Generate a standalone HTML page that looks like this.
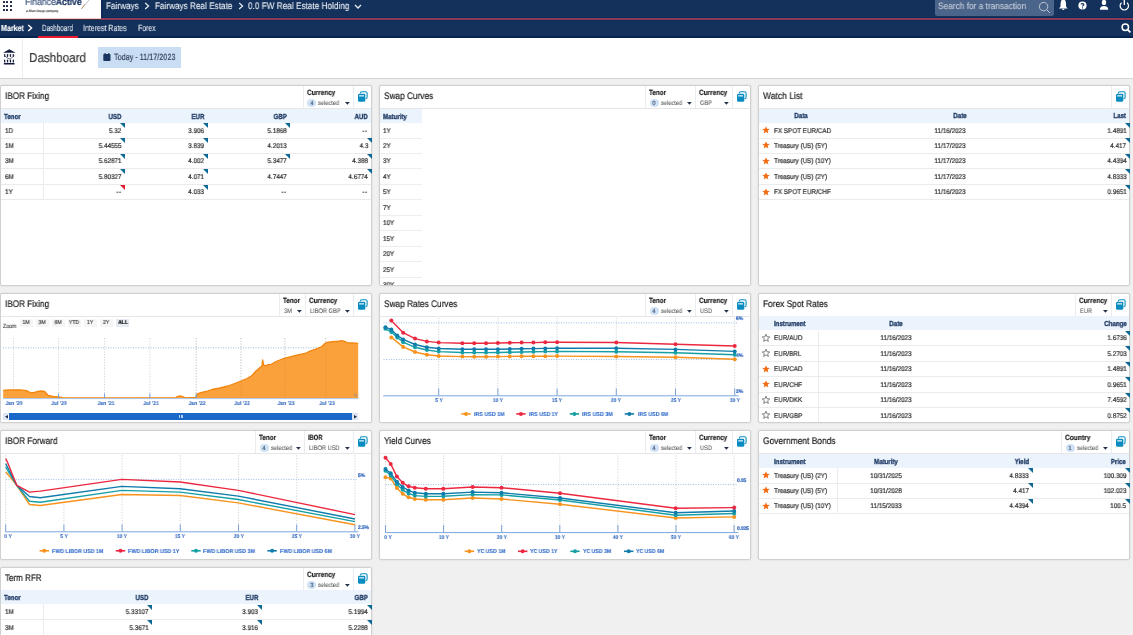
<!DOCTYPE html><html><head><meta charset="utf-8"><title>Dashboard</title><style>*{margin:0;padding:0}
html,body{width:1133px;height:635px;overflow:hidden;background:#f0f0f0}
body{position:relative;font-family:"Liberation Sans",sans-serif}
.r{position:absolute}
.t{position:absolute;white-space:nowrap;line-height:1;-webkit-text-stroke:0.2px currentColor;will-change:transform;text-rendering:geometricPrecision}
.ns{-webkit-text-stroke:0.12px currentColor}
svg.r{overflow:visible}</style></head><body><div style="position:absolute;left:0;top:0;width:1133px;height:635px;overflow:hidden">
<div class="r" style="left:0px;top:0px;width:1133px;height:38px;background:#13315a;"></div>
<div class="r" style="left:0px;top:0px;width:101px;height:19px;background:#fff;"></div>
<div class="r" style="left:0px;top:18px;width:101px;height:1px;background:#ffc8c8;"></div>
<div class="r" style="left:0px;top:19px;width:101px;height:1px;background:#3a3040;"></div>
<div class="r" style="left:101px;top:17px;width:1032px;height:1px;background:#0b2c5a;"></div>
<div class="r" style="left:101px;top:18px;width:1032px;height:2px;background:#8f3a57;"></div>
<div class="r" style="left:101px;top:20px;width:1032px;height:1px;background:#0b2c5a;"></div>
<div class="r" style="left:0px;top:36px;width:1133px;height:2px;background:#04234f;"></div>
<div class="r" style="left:101px;top:0px;width:2px;height:18px;background:#0c2b55;"></div>
<div class="r" style="left:2.7px;top:0.9px;width:2.2px;height:2.2px;background:#0a1430;border-radius:0.4px;"></div>
<div class="r" style="left:6.3px;top:0.9px;width:2.2px;height:2.2px;background:#0a1430;border-radius:0.4px;"></div>
<div class="r" style="left:10.0px;top:0.9px;width:2.2px;height:2.2px;background:#0a1430;border-radius:0.4px;"></div>
<div class="r" style="left:2.7px;top:4.9px;width:2.2px;height:2.2px;background:#0a1430;border-radius:0.4px;"></div>
<div class="r" style="left:6.3px;top:4.9px;width:2.2px;height:2.2px;background:#0a1430;border-radius:0.4px;"></div>
<div class="r" style="left:10.0px;top:4.9px;width:2.2px;height:2.2px;background:#0a1430;border-radius:0.4px;"></div>
<div class="r" style="left:2.7px;top:8.8px;width:2.2px;height:2.2px;background:#0a1430;border-radius:0.4px;"></div>
<div class="r" style="left:6.3px;top:8.8px;width:2.2px;height:2.2px;background:#0a1430;border-radius:0.4px;"></div>
<div class="r" style="left:10.0px;top:8.8px;width:2.2px;height:2.2px;background:#0a1430;border-radius:0.4px;"></div>
<div class="t" style="left:25px;top:-2.5px;font-size:9.6px;transform:scaleX(0.93);transform-origin:left;letter-spacing:-0.15px"><span style="color:#4b6088">Finance</span><span style="font-weight:bold;color:#16305e">Active</span></div>
<svg class="r" style="left:80px;top:0px;width:12px;height:10px" viewBox="0 0 12 10"><line x1="10" y1="-1" x2="1.5" y2="8.7" stroke="#9aa0aa" stroke-width="0.7"/><line x1="5" y1="4.4" x2="1.5" y2="8.7" stroke="#c8834a" stroke-width="0.8"/></svg>
<div class="t" style="left:25.60px;top:10.08px;font-size:3.20px;color:#666;transform:scaleX(0.977);transform-origin:left;">a Allan Group company</div>
<div class="t ns" style="left:106.00px;top:1.94px;font-size:9.60px;color:#e9edf3;transform:scaleX(0.854);transform-origin:left;">Fairways</div>
<svg class="r" style="left:143.5px;top:2px;width:6px;height:8px" viewBox="0 0 6 8"><polyline points="1.2,1 4.6,4 1.2,7" fill="none" stroke="#e9edf3" stroke-width="1.2"/></svg>
<div class="t ns" style="left:154.80px;top:1.94px;font-size:9.60px;color:#e9edf3;transform:scaleX(0.853);transform-origin:left;">Fairways Real Estate</div>
<svg class="r" style="left:237.5px;top:2px;width:6px;height:8px" viewBox="0 0 6 8"><polyline points="1.2,1 4.6,4 1.2,7" fill="none" stroke="#e9edf3" stroke-width="1.2"/></svg>
<div class="t ns" style="left:248.00px;top:1.94px;font-size:9.60px;color:#e9edf3;transform:scaleX(0.857);transform-origin:left;">0.0 FW Real Estate Holding</div>
<svg class="r" style="left:354px;top:3.5px;width:8px;height:6px" viewBox="0 0 8 6"><polyline points="1,1 4,4 7,1" fill="none" stroke="#e9edf3" stroke-width="1.3"/></svg>
<div class="r" style="left:935px;top:0px;width:118.5px;height:16px;background:#4b6489;border-radius:0 0 2.5px 2.5px;"></div>
<div class="t ns" style="left:937.90px;top:2.38px;font-size:9.20px;color:#c6cfdc;transform:scaleX(0.904);transform-origin:left;">Search for a transaction</div>
<svg class="r" style="left:1038px;top:1px;width:13px;height:13px" viewBox="0 0 13 13"><circle cx="5.6" cy="5.6" r="4.2" fill="none" stroke="#c6cfdc" stroke-width="0.9"/><line x1="8.6" y1="8.6" x2="11.8" y2="11.8" stroke="#c6cfdc" stroke-width="1"/></svg>
<svg class="r" style="left:1058px;top:0px;width:11px;height:11px" viewBox="0 0 11 11"><path d="M5.3 -0.5 C3 -0.5 2.6 2 2.6 4 L2.5 6.3 C2.3 7.3 1.5 7.9 0.9 8.5 L9.7 8.5 C9.1 7.9 8.3 7.3 8.1 6.3 L8 4 C8 2 7.6 -0.5 5.3 -0.5Z" fill="#fff"/><path d="M4.1 8.8 A1.2 1.2 0 0 0 6.5 8.8Z" fill="#fff"/></svg>
<svg class="r" style="left:1078px;top:1px;width:9px;height:9px" viewBox="0 0 9 9"><circle cx="4.5" cy="4.5" r="4.1" fill="#fff"/><path d="M3.1 3.5 C3.1 2.3 5.9 2.3 5.9 3.6 C5.9 4.5 4.5 4.5 4.5 5.5" fill="none" stroke="#13315a" stroke-width="1.1"/><circle cx="4.5" cy="6.9" r="0.65" fill="#13315a"/></svg>
<svg class="r" style="left:1099px;top:0px;width:11px;height:11px" viewBox="0 0 11 11"><ellipse cx="5" cy="2.4" rx="2.2" ry="2.7" fill="#fff"/><path d="M0.9 9.7 C0.9 7 2.8 6 5 6 C7.2 6 9.3 7 9.3 9.7Z" fill="#fff"/></svg>
<svg class="r" style="left:1118px;top:0px;width:12px;height:12px" viewBox="0 0 12 12"><path d="M3.6 2.6 A4.2 4.2 0 1 0 9 2.6" fill="none" stroke="#fff" stroke-width="1.2"/><line x1="6.3" y1="-0.5" x2="6.3" y2="5" stroke="#fff" stroke-width="1.3"/></svg>
<div class="t ns" style="left:1.40px;top:23.69px;font-size:8.60px;color:#fff;font-weight:bold;transform:scaleX(0.826);transform-origin:left;">Market</div>
<svg class="r" style="left:27px;top:24px;width:6px;height:8px" viewBox="0 0 6 8"><polyline points="1.2,1 4.6,4 1.2,7" fill="none" stroke="#fff" stroke-width="1.4"/></svg>
<div class="t ns" style="left:42.00px;top:23.63px;font-size:8.90px;color:#e4e9f0;transform:scaleX(0.712);transform-origin:left;">Dashboard</div>
<div class="r" style="left:37.6px;top:36px;width:40.5px;height:2px;background:#ee1730;"></div>
<div class="t ns" style="left:83.40px;top:23.63px;font-size:8.90px;color:#e4e9f0;transform:scaleX(0.791);transform-origin:left;">Interest Rates</div>
<div class="t ns" style="left:137.80px;top:23.63px;font-size:8.90px;color:#e4e9f0;transform:scaleX(0.778);transform-origin:left;">Forex</div>
<svg class="r" style="left:1121px;top:23px;width:11px;height:10px" viewBox="0 0 11 10"><circle cx="4.3" cy="4.3" r="3.2" fill="none" stroke="#fff" stroke-width="1.5"/><line x1="6.6" y1="6.6" x2="9.4" y2="9.3" stroke="#fff" stroke-width="1.8"/></svg>
<div class="r" style="left:0px;top:38px;width:1133px;height:40px;background:#fff;"></div>
<div class="r" style="left:0px;top:78px;width:1133px;height:1px;background:#d6d6d6;"></div>
<div class="r" style="left:22px;top:38px;width:1px;height:40px;background:#ededed;"></div>
<svg class="r" style="left:3px;top:49px;width:13px;height:16px" viewBox="0 0 13 16"><path d="M0.1 3.7 L6.3 0.3 L12.6 3.7Z" fill="#141a3c"/><g fill="#1b2142"><rect x="1.0" y="5" width="1.3" height="2.9" rx="0.6"/><rect x="3.9" y="5" width="1.3" height="2.9" rx="0.6"/><rect x="6.8" y="5" width="1.3" height="2.9" rx="0.6"/><rect x="9.7" y="5" width="1.3" height="2.9" rx="0.6"/><rect x="1.0" y="10.5" width="1.3" height="3" rx="0.6"/><rect x="3.9" y="10.5" width="1.3" height="3" rx="0.6"/><rect x="6.8" y="10.5" width="1.3" height="3" rx="0.6"/><rect x="9.7" y="10.5" width="1.3" height="3" rx="0.6"/></g><polyline points="1,6.4 4.5,9 7.3,10.2 11.4,6" fill="none" stroke="#555a70" stroke-width="0.9"/><rect x="0.8" y="14" width="10.8" height="1.5" rx="0.5" fill="#141a3c"/></svg>
<div class="t" style="left:29.00px;top:51.25px;font-size:13.00px;color:#383838;transform:scaleX(0.897);transform-origin:left;">Dashboard</div>
<div class="r" style="left:98px;top:47px;width:83px;height:21px;background:#c9def3;"></div>
<svg class="r" style="left:103px;top:53px;width:8px;height:8px" viewBox="0 0 8 8"><rect x="0.3" y="1" width="7.2" height="7" rx="0.8" fill="#1b3563"/><rect x="1.5" y="0" width="1.1" height="2" fill="#1b3563"/><rect x="5.2" y="0" width="1.1" height="2" fill="#1b3563"/></svg>
<div class="t" style="left:113.80px;top:52.85px;font-size:9.00px;color:#34405e;transform:scaleX(0.804);transform-origin:left;">Today - 11/17/2023</div>
<div class="r" style="left:0px;top:79px;width:1133px;height:556px;background:#f0f0f0;"></div>
<div class="r" style="left:0px;top:85px;width:372px;height:201px;background:#fff;border:1px solid #d0d0d0;box-sizing:border-box;border-radius:2px;box-shadow:0 0 2px rgba(0,0,0,0.12);"></div>
<div class="r" style="left:1px;top:107.5px;width:370px;height:1px;background:#e6e6e6;"></div>
<div class="t" style="left:5.00px;top:92.14px;font-size:9.60px;color:#1c1c1c;transform:scaleX(0.852);transform-origin:left;">IBOR Fixing</div>
<div class="r" style="left:353px;top:86px;width:1px;height:22px;background:#e9edf1;"></div>
<svg class="r" style="left:357px;top:91.4px;width:11px;height:11px" viewBox="0 0 11 11"><path d="M3.3 2.4 Q3.4 0.8 4.8 0.8 H8.7 Q10.1 0.8 10.1 2.2 V6.2 Q10.1 7.7 8.6 7.7" fill="none" stroke="#0b8fc2" stroke-width="1.1"/><rect x="1" y="2.8" width="7.3" height="8" rx="1.4" fill="#0a8cc0"/><rect x="2.2" y="4.2" width="4.8" height="1.3" fill="#d8eef8"/></svg>
<svg class="r" style="left:344.5px;top:102.0px;width:5px;height:3px" viewBox="0 0 5 3"><path d="M0 0 H4.8 L2.4 2.7Z" fill="#25324a"/></svg>
<div class="r" style="left:302.5px;top:86px;width:1px;height:22px;background:#e9edf1;"></div>
<div class="t" style="left:306.80px;top:89.14px;font-size:7.60px;color:#1e1e1e;font-weight:bold;transform:scaleX(0.851);transform-origin:left;">Currency</div>
<div class="r" style="left:307.3px;top:99.3px;width:9.2px;height:7.4px;border-radius:4px;background:#d0e3f6"></div>
<div class="t" style="left:111.90px;width:400px;text-align:center;top:100.70px;font-size:6.00px;color:#4a5c7a;transform:scaleX(0.900);transform-origin:center;">4</div>
<div class="t" style="left:318.10px;top:100.96px;font-size:6.40px;color:#555;transform:scaleX(0.885);transform-origin:left;-webkit-text-stroke:0.05px currentColor;">selected</div>
<div class="r" style="left:379px;top:85px;width:372px;height:201px;background:#fff;border:1px solid #d0d0d0;box-sizing:border-box;border-radius:2px;box-shadow:0 0 2px rgba(0,0,0,0.12);"></div>
<div class="r" style="left:380px;top:107.5px;width:370px;height:1px;background:#e6e6e6;"></div>
<div class="t" style="left:384.00px;top:92.14px;font-size:9.60px;color:#1c1c1c;transform:scaleX(0.862);transform-origin:left;">Swap Curves</div>
<div class="r" style="left:732px;top:86px;width:1px;height:22px;background:#e9edf1;"></div>
<svg class="r" style="left:736px;top:91.4px;width:11px;height:11px" viewBox="0 0 11 11"><path d="M3.3 2.4 Q3.4 0.8 4.8 0.8 H8.7 Q10.1 0.8 10.1 2.2 V6.2 Q10.1 7.7 8.6 7.7" fill="none" stroke="#0b8fc2" stroke-width="1.1"/><rect x="1" y="2.8" width="7.3" height="8" rx="1.4" fill="#0a8cc0"/><rect x="2.2" y="4.2" width="4.8" height="1.3" fill="#d8eef8"/></svg>
<svg class="r" style="left:723.5px;top:102.0px;width:5px;height:3px" viewBox="0 0 5 3"><path d="M0 0 H4.8 L2.4 2.7Z" fill="#25324a"/></svg>
<div class="r" style="left:695px;top:86px;width:1px;height:22px;background:#e9edf1;"></div>
<div class="t" style="left:699.30px;top:89.14px;font-size:7.60px;color:#1e1e1e;font-weight:bold;transform:scaleX(0.851);transform-origin:left;">Currency</div>
<div class="t" style="left:700.00px;top:100.69px;font-size:6.60px;color:#555;transform:scaleX(0.860);transform-origin:left;-webkit-text-stroke:0.05px currentColor;">GBP</div>
<svg class="r" style="left:686.5px;top:102.0px;width:5px;height:3px" viewBox="0 0 5 3"><path d="M0 0 H4.8 L2.4 2.7Z" fill="#25324a"/></svg>
<div class="r" style="left:645px;top:86px;width:1px;height:22px;background:#e9edf1;"></div>
<div class="t" style="left:649.30px;top:89.14px;font-size:7.60px;color:#1e1e1e;font-weight:bold;transform:scaleX(0.827);transform-origin:left;">Tenor</div>
<div class="r" style="left:649.8000000000001px;top:99.3px;width:9.2px;height:7.4px;border-radius:4px;background:#d0e3f6"></div>
<div class="t" style="left:454.40px;width:400px;text-align:center;top:100.70px;font-size:6.00px;color:#4a5c7a;transform:scaleX(0.900);transform-origin:center;">0</div>
<div class="t" style="left:660.60px;top:100.96px;font-size:6.40px;color:#555;transform:scaleX(0.885);transform-origin:left;-webkit-text-stroke:0.05px currentColor;">selected</div>
<div class="r" style="left:758px;top:85px;width:372px;height:201px;background:#fff;border:1px solid #d0d0d0;box-sizing:border-box;border-radius:2px;box-shadow:0 0 2px rgba(0,0,0,0.12);"></div>
<div class="r" style="left:759px;top:107.5px;width:370px;height:1px;background:#e6e6e6;"></div>
<div class="t" style="left:763.00px;top:92.14px;font-size:9.60px;color:#1c1c1c;transform:scaleX(0.889);transform-origin:left;">Watch List</div>
<div class="r" style="left:1111px;top:86px;width:1px;height:22px;background:#e9edf1;"></div>
<svg class="r" style="left:1115px;top:91.4px;width:11px;height:11px" viewBox="0 0 11 11"><path d="M3.3 2.4 Q3.4 0.8 4.8 0.8 H8.7 Q10.1 0.8 10.1 2.2 V6.2 Q10.1 7.7 8.6 7.7" fill="none" stroke="#0b8fc2" stroke-width="1.1"/><rect x="1" y="2.8" width="7.3" height="8" rx="1.4" fill="#0a8cc0"/><rect x="2.2" y="4.2" width="4.8" height="1.3" fill="#d8eef8"/></svg>
<div class="r" style="left:0px;top:293px;width:372px;height:130px;background:#fff;border:1px solid #d0d0d0;box-sizing:border-box;border-radius:2px;box-shadow:0 0 2px rgba(0,0,0,0.12);"></div>
<div class="r" style="left:1px;top:315.5px;width:370px;height:1px;background:#e6e6e6;"></div>
<div class="t" style="left:5.00px;top:300.14px;font-size:9.60px;color:#1c1c1c;transform:scaleX(0.852);transform-origin:left;">IBOR Fixing</div>
<div class="r" style="left:353px;top:294px;width:1px;height:22px;background:#e9edf1;"></div>
<svg class="r" style="left:357px;top:299.4px;width:11px;height:11px" viewBox="0 0 11 11"><path d="M3.3 2.4 Q3.4 0.8 4.8 0.8 H8.7 Q10.1 0.8 10.1 2.2 V6.2 Q10.1 7.7 8.6 7.7" fill="none" stroke="#0b8fc2" stroke-width="1.1"/><rect x="1" y="2.8" width="7.3" height="8" rx="1.4" fill="#0a8cc0"/><rect x="2.2" y="4.2" width="4.8" height="1.3" fill="#d8eef8"/></svg>
<svg class="r" style="left:344.5px;top:310.0px;width:5px;height:3px" viewBox="0 0 5 3"><path d="M0 0 H4.8 L2.4 2.7Z" fill="#25324a"/></svg>
<div class="r" style="left:305px;top:294px;width:1px;height:22px;background:#e9edf1;"></div>
<div class="t" style="left:309.30px;top:297.14px;font-size:7.60px;color:#1e1e1e;font-weight:bold;transform:scaleX(0.851);transform-origin:left;">Currency</div>
<div class="t" style="left:310.00px;top:308.69px;font-size:6.60px;color:#555;transform:scaleX(0.860);transform-origin:left;-webkit-text-stroke:0.05px currentColor;">LIBOR GBP</div>
<svg class="r" style="left:296.5px;top:310.0px;width:5px;height:3px" viewBox="0 0 5 3"><path d="M0 0 H4.8 L2.4 2.7Z" fill="#25324a"/></svg>
<div class="r" style="left:279px;top:294px;width:1px;height:22px;background:#e9edf1;"></div>
<div class="t" style="left:283.30px;top:297.14px;font-size:7.60px;color:#1e1e1e;font-weight:bold;transform:scaleX(0.827);transform-origin:left;">Tenor</div>
<div class="t" style="left:284.00px;top:308.69px;font-size:6.60px;color:#555;transform:scaleX(0.860);transform-origin:left;-webkit-text-stroke:0.05px currentColor;">3M</div>
<div class="r" style="left:379px;top:293px;width:372px;height:130px;background:#fff;border:1px solid #d0d0d0;box-sizing:border-box;border-radius:2px;box-shadow:0 0 2px rgba(0,0,0,0.12);"></div>
<div class="r" style="left:380px;top:315.5px;width:370px;height:1px;background:#e6e6e6;"></div>
<div class="t" style="left:384.00px;top:300.14px;font-size:9.60px;color:#1c1c1c;transform:scaleX(0.864);transform-origin:left;">Swap Rates Curves</div>
<div class="r" style="left:732px;top:294px;width:1px;height:22px;background:#e9edf1;"></div>
<svg class="r" style="left:736px;top:299.4px;width:11px;height:11px" viewBox="0 0 11 11"><path d="M3.3 2.4 Q3.4 0.8 4.8 0.8 H8.7 Q10.1 0.8 10.1 2.2 V6.2 Q10.1 7.7 8.6 7.7" fill="none" stroke="#0b8fc2" stroke-width="1.1"/><rect x="1" y="2.8" width="7.3" height="8" rx="1.4" fill="#0a8cc0"/><rect x="2.2" y="4.2" width="4.8" height="1.3" fill="#d8eef8"/></svg>
<svg class="r" style="left:723.5px;top:310.0px;width:5px;height:3px" viewBox="0 0 5 3"><path d="M0 0 H4.8 L2.4 2.7Z" fill="#25324a"/></svg>
<div class="r" style="left:695px;top:294px;width:1px;height:22px;background:#e9edf1;"></div>
<div class="t" style="left:699.30px;top:297.14px;font-size:7.60px;color:#1e1e1e;font-weight:bold;transform:scaleX(0.851);transform-origin:left;">Currency</div>
<div class="t" style="left:700.00px;top:308.69px;font-size:6.60px;color:#555;transform:scaleX(0.860);transform-origin:left;-webkit-text-stroke:0.05px currentColor;">USD</div>
<svg class="r" style="left:686.5px;top:310.0px;width:5px;height:3px" viewBox="0 0 5 3"><path d="M0 0 H4.8 L2.4 2.7Z" fill="#25324a"/></svg>
<div class="r" style="left:645px;top:294px;width:1px;height:22px;background:#e9edf1;"></div>
<div class="t" style="left:649.30px;top:297.14px;font-size:7.60px;color:#1e1e1e;font-weight:bold;transform:scaleX(0.827);transform-origin:left;">Tenor</div>
<div class="r" style="left:649.8000000000001px;top:307.3px;width:9.2px;height:7.4px;border-radius:4px;background:#d0e3f6"></div>
<div class="t" style="left:454.40px;width:400px;text-align:center;top:308.70px;font-size:6.00px;color:#4a5c7a;transform:scaleX(0.900);transform-origin:center;">4</div>
<div class="t" style="left:660.60px;top:308.96px;font-size:6.40px;color:#555;transform:scaleX(0.885);transform-origin:left;-webkit-text-stroke:0.05px currentColor;">selected</div>
<div class="r" style="left:758px;top:293px;width:372px;height:130px;background:#fff;border:1px solid #d0d0d0;box-sizing:border-box;border-radius:2px;box-shadow:0 0 2px rgba(0,0,0,0.12);"></div>
<div class="r" style="left:759px;top:315.5px;width:370px;height:1px;background:#e6e6e6;"></div>
<div class="t" style="left:763.00px;top:300.14px;font-size:9.60px;color:#1c1c1c;transform:scaleX(0.869);transform-origin:left;">Forex Spot Rates</div>
<div class="r" style="left:1111px;top:294px;width:1px;height:22px;background:#e9edf1;"></div>
<svg class="r" style="left:1115px;top:299.4px;width:11px;height:11px" viewBox="0 0 11 11"><path d="M3.3 2.4 Q3.4 0.8 4.8 0.8 H8.7 Q10.1 0.8 10.1 2.2 V6.2 Q10.1 7.7 8.6 7.7" fill="none" stroke="#0b8fc2" stroke-width="1.1"/><rect x="1" y="2.8" width="7.3" height="8" rx="1.4" fill="#0a8cc0"/><rect x="2.2" y="4.2" width="4.8" height="1.3" fill="#d8eef8"/></svg>
<svg class="r" style="left:1102.5px;top:310.0px;width:5px;height:3px" viewBox="0 0 5 3"><path d="M0 0 H4.8 L2.4 2.7Z" fill="#25324a"/></svg>
<div class="r" style="left:1075px;top:294px;width:1px;height:22px;background:#e9edf1;"></div>
<div class="t" style="left:1079.30px;top:297.14px;font-size:7.60px;color:#1e1e1e;font-weight:bold;transform:scaleX(0.851);transform-origin:left;">Currency</div>
<div class="t" style="left:1080.00px;top:308.69px;font-size:6.60px;color:#555;transform:scaleX(0.860);transform-origin:left;-webkit-text-stroke:0.05px currentColor;">EUR</div>
<div class="r" style="left:0px;top:430px;width:372px;height:130px;background:#fff;border:1px solid #d0d0d0;box-sizing:border-box;border-radius:2px;box-shadow:0 0 2px rgba(0,0,0,0.12);"></div>
<div class="r" style="left:1px;top:452.5px;width:370px;height:1px;background:#e6e6e6;"></div>
<div class="t" style="left:5.00px;top:437.14px;font-size:9.60px;color:#1c1c1c;transform:scaleX(0.857);transform-origin:left;">IBOR Forward</div>
<div class="r" style="left:353px;top:431px;width:1px;height:22px;background:#e9edf1;"></div>
<svg class="r" style="left:357px;top:436.4px;width:11px;height:11px" viewBox="0 0 11 11"><path d="M3.3 2.4 Q3.4 0.8 4.8 0.8 H8.7 Q10.1 0.8 10.1 2.2 V6.2 Q10.1 7.7 8.6 7.7" fill="none" stroke="#0b8fc2" stroke-width="1.1"/><rect x="1" y="2.8" width="7.3" height="8" rx="1.4" fill="#0a8cc0"/><rect x="2.2" y="4.2" width="4.8" height="1.3" fill="#d8eef8"/></svg>
<svg class="r" style="left:344.5px;top:447.0px;width:5px;height:3px" viewBox="0 0 5 3"><path d="M0 0 H4.8 L2.4 2.7Z" fill="#25324a"/></svg>
<div class="r" style="left:304px;top:431px;width:1px;height:22px;background:#e9edf1;"></div>
<div class="t" style="left:308.30px;top:434.14px;font-size:7.60px;color:#1e1e1e;font-weight:bold;transform:scaleX(0.763);transform-origin:left;">IBOR</div>
<div class="t" style="left:309.00px;top:445.69px;font-size:6.60px;color:#555;transform:scaleX(0.860);transform-origin:left;-webkit-text-stroke:0.05px currentColor;">LIBOR USD</div>
<svg class="r" style="left:295.5px;top:447.0px;width:5px;height:3px" viewBox="0 0 5 3"><path d="M0 0 H4.8 L2.4 2.7Z" fill="#25324a"/></svg>
<div class="r" style="left:255px;top:431px;width:1px;height:22px;background:#e9edf1;"></div>
<div class="t" style="left:259.30px;top:434.14px;font-size:7.60px;color:#1e1e1e;font-weight:bold;transform:scaleX(0.827);transform-origin:left;">Tenor</div>
<div class="r" style="left:259.8px;top:444.3px;width:9.2px;height:7.4px;border-radius:4px;background:#d0e3f6"></div>
<div class="t" style="left:64.40px;width:400px;text-align:center;top:445.70px;font-size:6.00px;color:#4a5c7a;transform:scaleX(0.900);transform-origin:center;">4</div>
<div class="t" style="left:270.60px;top:445.96px;font-size:6.40px;color:#555;transform:scaleX(0.885);transform-origin:left;-webkit-text-stroke:0.05px currentColor;">selected</div>
<div class="r" style="left:379px;top:430px;width:372px;height:130px;background:#fff;border:1px solid #d0d0d0;box-sizing:border-box;border-radius:2px;box-shadow:0 0 2px rgba(0,0,0,0.12);"></div>
<div class="r" style="left:380px;top:452.5px;width:370px;height:1px;background:#e6e6e6;"></div>
<div class="t" style="left:384.00px;top:437.14px;font-size:9.60px;color:#1c1c1c;transform:scaleX(0.866);transform-origin:left;">Yield Curves</div>
<div class="r" style="left:732px;top:431px;width:1px;height:22px;background:#e9edf1;"></div>
<svg class="r" style="left:736px;top:436.4px;width:11px;height:11px" viewBox="0 0 11 11"><path d="M3.3 2.4 Q3.4 0.8 4.8 0.8 H8.7 Q10.1 0.8 10.1 2.2 V6.2 Q10.1 7.7 8.6 7.7" fill="none" stroke="#0b8fc2" stroke-width="1.1"/><rect x="1" y="2.8" width="7.3" height="8" rx="1.4" fill="#0a8cc0"/><rect x="2.2" y="4.2" width="4.8" height="1.3" fill="#d8eef8"/></svg>
<svg class="r" style="left:723.5px;top:447.0px;width:5px;height:3px" viewBox="0 0 5 3"><path d="M0 0 H4.8 L2.4 2.7Z" fill="#25324a"/></svg>
<div class="r" style="left:695px;top:431px;width:1px;height:22px;background:#e9edf1;"></div>
<div class="t" style="left:699.30px;top:434.14px;font-size:7.60px;color:#1e1e1e;font-weight:bold;transform:scaleX(0.851);transform-origin:left;">Currency</div>
<div class="t" style="left:700.00px;top:445.69px;font-size:6.60px;color:#555;transform:scaleX(0.860);transform-origin:left;-webkit-text-stroke:0.05px currentColor;">USD</div>
<svg class="r" style="left:686.5px;top:447.0px;width:5px;height:3px" viewBox="0 0 5 3"><path d="M0 0 H4.8 L2.4 2.7Z" fill="#25324a"/></svg>
<div class="r" style="left:645px;top:431px;width:1px;height:22px;background:#e9edf1;"></div>
<div class="t" style="left:649.30px;top:434.14px;font-size:7.60px;color:#1e1e1e;font-weight:bold;transform:scaleX(0.827);transform-origin:left;">Tenor</div>
<div class="r" style="left:649.8000000000001px;top:444.3px;width:9.2px;height:7.4px;border-radius:4px;background:#d0e3f6"></div>
<div class="t" style="left:454.40px;width:400px;text-align:center;top:445.70px;font-size:6.00px;color:#4a5c7a;transform:scaleX(0.900);transform-origin:center;">4</div>
<div class="t" style="left:660.60px;top:445.96px;font-size:6.40px;color:#555;transform:scaleX(0.885);transform-origin:left;-webkit-text-stroke:0.05px currentColor;">selected</div>
<div class="r" style="left:758px;top:430px;width:372px;height:130px;background:#fff;border:1px solid #d0d0d0;box-sizing:border-box;border-radius:2px;box-shadow:0 0 2px rgba(0,0,0,0.12);"></div>
<div class="r" style="left:759px;top:452.5px;width:370px;height:1px;background:#e6e6e6;"></div>
<div class="t" style="left:763.00px;top:437.14px;font-size:9.60px;color:#1c1c1c;transform:scaleX(0.879);transform-origin:left;">Government Bonds</div>
<div class="r" style="left:1111px;top:431px;width:1px;height:22px;background:#e9edf1;"></div>
<svg class="r" style="left:1115px;top:436.4px;width:11px;height:11px" viewBox="0 0 11 11"><path d="M3.3 2.4 Q3.4 0.8 4.8 0.8 H8.7 Q10.1 0.8 10.1 2.2 V6.2 Q10.1 7.7 8.6 7.7" fill="none" stroke="#0b8fc2" stroke-width="1.1"/><rect x="1" y="2.8" width="7.3" height="8" rx="1.4" fill="#0a8cc0"/><rect x="2.2" y="4.2" width="4.8" height="1.3" fill="#d8eef8"/></svg>
<svg class="r" style="left:1102.5px;top:447.0px;width:5px;height:3px" viewBox="0 0 5 3"><path d="M0 0 H4.8 L2.4 2.7Z" fill="#25324a"/></svg>
<div class="r" style="left:1061px;top:431px;width:1px;height:22px;background:#e9edf1;"></div>
<div class="t" style="left:1065.30px;top:434.14px;font-size:7.60px;color:#1e1e1e;font-weight:bold;transform:scaleX(0.871);transform-origin:left;">Country</div>
<div class="r" style="left:1065.8px;top:444.3px;width:9.2px;height:7.4px;border-radius:4px;background:#d0e3f6"></div>
<div class="t" style="left:870.40px;width:400px;text-align:center;top:445.70px;font-size:6.00px;color:#4a5c7a;transform:scaleX(0.900);transform-origin:center;">1</div>
<div class="t" style="left:1076.60px;top:445.96px;font-size:6.40px;color:#555;transform:scaleX(0.885);transform-origin:left;-webkit-text-stroke:0.05px currentColor;">selected</div>
<div class="r" style="left:0px;top:567px;width:372px;height:80px;background:#fff;border:1px solid #d0d0d0;box-sizing:border-box;border-radius:2px;box-shadow:0 0 2px rgba(0,0,0,0.12);"></div>
<div class="r" style="left:1px;top:589.5px;width:370px;height:1px;background:#e6e6e6;"></div>
<div class="t" style="left:5.00px;top:574.14px;font-size:9.60px;color:#1c1c1c;transform:scaleX(0.837);transform-origin:left;">Term RFR</div>
<div class="r" style="left:353px;top:568px;width:1px;height:22px;background:#e9edf1;"></div>
<svg class="r" style="left:357px;top:573.4px;width:11px;height:11px" viewBox="0 0 11 11"><path d="M3.3 2.4 Q3.4 0.8 4.8 0.8 H8.7 Q10.1 0.8 10.1 2.2 V6.2 Q10.1 7.7 8.6 7.7" fill="none" stroke="#0b8fc2" stroke-width="1.1"/><rect x="1" y="2.8" width="7.3" height="8" rx="1.4" fill="#0a8cc0"/><rect x="2.2" y="4.2" width="4.8" height="1.3" fill="#d8eef8"/></svg>
<svg class="r" style="left:344.5px;top:584.0px;width:5px;height:3px" viewBox="0 0 5 3"><path d="M0 0 H4.8 L2.4 2.7Z" fill="#25324a"/></svg>
<div class="r" style="left:302.5px;top:568px;width:1px;height:22px;background:#e9edf1;"></div>
<div class="t" style="left:306.80px;top:571.14px;font-size:7.60px;color:#1e1e1e;font-weight:bold;transform:scaleX(0.851);transform-origin:left;">Currency</div>
<div class="r" style="left:307.3px;top:581.3px;width:9.2px;height:7.4px;border-radius:4px;background:#d0e3f6"></div>
<div class="t" style="left:111.90px;width:400px;text-align:center;top:582.70px;font-size:6.00px;color:#4a5c7a;transform:scaleX(0.900);transform-origin:center;">3</div>
<div class="t" style="left:318.10px;top:582.96px;font-size:6.40px;color:#555;transform:scaleX(0.885);transform-origin:left;-webkit-text-stroke:0.05px currentColor;">selected</div>
<div class="r" style="left:1px;top:108.6px;width:370px;height:14px;background:#ebf3fc;"></div>
<div class="t" style="left:4.30px;top:112.59px;font-size:7.30px;color:#17335f;font-weight:bold;transform:scaleX(0.840);transform-origin:left;-webkit-text-stroke:0.3px currentColor;">Tenor</div>
<div class="t" style="right:1011.30px;top:112.59px;font-size:7.30px;color:#17335f;font-weight:bold;transform:scaleX(0.840);transform-origin:right;-webkit-text-stroke:0.3px currentColor;">USD</div>
<div class="t" style="right:929.00px;top:112.59px;font-size:7.30px;color:#17335f;font-weight:bold;transform:scaleX(0.840);transform-origin:right;-webkit-text-stroke:0.3px currentColor;">EUR</div>
<div class="t" style="right:846.70px;top:112.59px;font-size:7.30px;color:#17335f;font-weight:bold;transform:scaleX(0.840);transform-origin:right;-webkit-text-stroke:0.3px currentColor;">GBP</div>
<div class="t" style="right:765.00px;top:112.59px;font-size:7.30px;color:#17335f;font-weight:bold;transform:scaleX(0.840);transform-origin:right;-webkit-text-stroke:0.3px currentColor;">AUD</div>
<div class="t" style="left:4.60px;top:128.52px;font-size:6.80px;color:#2a2a2a;transform:scaleX(0.930);transform-origin:left;">1D</div>
<div class="t" style="right:1011.30px;top:128.52px;font-size:6.80px;color:#2a2a2a;transform:scaleX(0.930);transform-origin:right;">5.32</div>
<svg class="r" style="left:120.3px;top:123.0px;width:5px;height:5px" viewBox="0 0 5 5"><path d="M0 0 H5 V5Z" fill="#0d6896"/></svg>
<div class="t" style="right:929.00px;top:128.52px;font-size:6.80px;color:#2a2a2a;transform:scaleX(0.930);transform-origin:right;">3.906</div>
<svg class="r" style="left:202.6px;top:123.0px;width:5px;height:5px" viewBox="0 0 5 5"><path d="M0 0 H5 V5Z" fill="#0d6896"/></svg>
<div class="t" style="right:846.70px;top:128.52px;font-size:6.80px;color:#2a2a2a;transform:scaleX(0.930);transform-origin:right;">5.1868</div>
<svg class="r" style="left:284.9px;top:123.0px;width:5px;height:5px" viewBox="0 0 5 5"><path d="M0 0 H5 V5Z" fill="#0d6896"/></svg>
<div class="t" style="right:765.00px;top:128.52px;font-size:6.80px;color:#2a2a2a;transform:scaleX(0.930);transform-origin:right;letter-spacing:0.6px;">--</div>
<div class="r" style="left:1px;top:137.54999999999998px;width:370px;height:1px;background:#ebebeb;"></div>
<div class="t" style="left:4.60px;top:143.97px;font-size:6.80px;color:#2a2a2a;transform:scaleX(0.930);transform-origin:left;">1M</div>
<div class="t" style="right:1011.30px;top:143.97px;font-size:6.80px;color:#2a2a2a;transform:scaleX(0.930);transform-origin:right;">5.44555</div>
<svg class="r" style="left:120.3px;top:138.45px;width:5px;height:5px" viewBox="0 0 5 5"><path d="M0 0 H5 V5Z" fill="#0d6896"/></svg>
<div class="t" style="right:929.00px;top:143.97px;font-size:6.80px;color:#2a2a2a;transform:scaleX(0.930);transform-origin:right;">3.839</div>
<svg class="r" style="left:202.6px;top:138.45px;width:5px;height:5px" viewBox="0 0 5 5"><path d="M0 0 H5 V5Z" fill="#0d6896"/></svg>
<div class="t" style="right:846.70px;top:143.97px;font-size:6.80px;color:#2a2a2a;transform:scaleX(0.930);transform-origin:right;">4.2013</div>
<div class="t" style="right:765.00px;top:143.97px;font-size:6.80px;color:#2a2a2a;transform:scaleX(0.930);transform-origin:right;">4.3</div>
<svg class="r" style="left:366.6px;top:138.45px;width:5px;height:5px" viewBox="0 0 5 5"><path d="M0 0 H5 V5Z" fill="#0d6896"/></svg>
<div class="r" style="left:1px;top:152.99999999999997px;width:370px;height:1px;background:#ebebeb;"></div>
<div class="t" style="left:4.60px;top:159.42px;font-size:6.80px;color:#2a2a2a;transform:scaleX(0.930);transform-origin:left;">3M</div>
<div class="t" style="right:1011.30px;top:159.42px;font-size:6.80px;color:#2a2a2a;transform:scaleX(0.930);transform-origin:right;">5.62871</div>
<svg class="r" style="left:120.3px;top:153.9px;width:5px;height:5px" viewBox="0 0 5 5"><path d="M0 0 H5 V5Z" fill="#0d6896"/></svg>
<div class="t" style="right:929.00px;top:159.42px;font-size:6.80px;color:#2a2a2a;transform:scaleX(0.930);transform-origin:right;">4.002</div>
<svg class="r" style="left:202.6px;top:153.9px;width:5px;height:5px" viewBox="0 0 5 5"><path d="M0 0 H5 V5Z" fill="#0d6896"/></svg>
<div class="t" style="right:846.70px;top:159.42px;font-size:6.80px;color:#2a2a2a;transform:scaleX(0.930);transform-origin:right;">5.3477</div>
<svg class="r" style="left:284.9px;top:153.9px;width:5px;height:5px" viewBox="0 0 5 5"><path d="M0 0 H5 V5Z" fill="#0d6896"/></svg>
<div class="t" style="right:765.00px;top:159.42px;font-size:6.80px;color:#2a2a2a;transform:scaleX(0.930);transform-origin:right;">4.388</div>
<svg class="r" style="left:366.6px;top:153.9px;width:5px;height:5px" viewBox="0 0 5 5"><path d="M0 0 H5 V5Z" fill="#0d6896"/></svg>
<div class="r" style="left:1px;top:168.45px;width:370px;height:1px;background:#ebebeb;"></div>
<div class="t" style="left:4.60px;top:174.87px;font-size:6.80px;color:#2a2a2a;transform:scaleX(0.930);transform-origin:left;">6M</div>
<div class="t" style="right:1011.30px;top:174.87px;font-size:6.80px;color:#2a2a2a;transform:scaleX(0.930);transform-origin:right;">5.80327</div>
<svg class="r" style="left:120.3px;top:169.35px;width:5px;height:5px" viewBox="0 0 5 5"><path d="M0 0 H5 V5Z" fill="#0d6896"/></svg>
<div class="t" style="right:929.00px;top:174.87px;font-size:6.80px;color:#2a2a2a;transform:scaleX(0.930);transform-origin:right;">4.071</div>
<svg class="r" style="left:202.6px;top:169.35px;width:5px;height:5px" viewBox="0 0 5 5"><path d="M0 0 H5 V5Z" fill="#0d6896"/></svg>
<div class="t" style="right:846.70px;top:174.87px;font-size:6.80px;color:#2a2a2a;transform:scaleX(0.930);transform-origin:right;">4.7447</div>
<div class="t" style="right:765.00px;top:174.87px;font-size:6.80px;color:#2a2a2a;transform:scaleX(0.930);transform-origin:right;">4.6774</div>
<svg class="r" style="left:366.6px;top:169.35px;width:5px;height:5px" viewBox="0 0 5 5"><path d="M0 0 H5 V5Z" fill="#0d6896"/></svg>
<div class="r" style="left:1px;top:183.89999999999998px;width:370px;height:1px;background:#ebebeb;"></div>
<div class="t" style="left:4.60px;top:190.32px;font-size:6.80px;color:#2a2a2a;transform:scaleX(0.930);transform-origin:left;">1Y</div>
<div class="t" style="right:1011.30px;top:190.32px;font-size:6.80px;color:#2a2a2a;transform:scaleX(0.930);transform-origin:right;letter-spacing:0.6px;">--</div>
<svg class="r" style="left:120.3px;top:184.79999999999998px;width:5px;height:5px" viewBox="0 0 5 5"><path d="M0 0 H5 V5Z" fill="#e3172d"/></svg>
<div class="t" style="right:929.00px;top:190.32px;font-size:6.80px;color:#2a2a2a;transform:scaleX(0.930);transform-origin:right;">4.033</div>
<svg class="r" style="left:202.6px;top:184.79999999999998px;width:5px;height:5px" viewBox="0 0 5 5"><path d="M0 0 H5 V5Z" fill="#0d6896"/></svg>
<div class="t" style="right:846.70px;top:190.32px;font-size:6.80px;color:#2a2a2a;transform:scaleX(0.930);transform-origin:right;letter-spacing:0.6px;">--</div>
<div class="t" style="right:765.00px;top:190.32px;font-size:6.80px;color:#2a2a2a;transform:scaleX(0.930);transform-origin:right;letter-spacing:0.6px;">--</div>
<div class="r" style="left:1px;top:199.34999999999997px;width:370px;height:1px;background:#ebebeb;"></div>
<div class="r" style="left:43px;top:122.6px;width:1px;height:77.25px;background:#ececec;"></div>
<div class="r" style="left:380px;top:108.6px;width:42px;height:14px;background:#ebf3fc;"></div>
<div class="t" style="left:383.20px;top:112.59px;font-size:7.30px;color:#17335f;font-weight:bold;transform:scaleX(0.840);transform-origin:left;-webkit-text-stroke:0.3px currentColor;">Maturity</div>
<div class="r" style="left:0;top:0;width:1133px;height:285px;overflow:hidden">
<div class="t" style="left:383.20px;top:128.52px;font-size:6.80px;color:#2a2a2a;transform:scaleX(0.930);transform-origin:left;">1Y</div>
<div class="r" style="left:380px;top:137.54999999999998px;width:42px;height:1px;background:#eeeeee;"></div>
<div class="t" style="left:383.20px;top:143.97px;font-size:6.80px;color:#2a2a2a;transform:scaleX(0.930);transform-origin:left;">2Y</div>
<div class="r" style="left:380px;top:152.99999999999997px;width:42px;height:1px;background:#eeeeee;"></div>
<div class="t" style="left:383.20px;top:159.42px;font-size:6.80px;color:#2a2a2a;transform:scaleX(0.930);transform-origin:left;">3Y</div>
<div class="r" style="left:380px;top:168.45px;width:42px;height:1px;background:#eeeeee;"></div>
<div class="t" style="left:383.20px;top:174.87px;font-size:6.80px;color:#2a2a2a;transform:scaleX(0.930);transform-origin:left;">4Y</div>
<div class="r" style="left:380px;top:183.89999999999998px;width:42px;height:1px;background:#eeeeee;"></div>
<div class="t" style="left:383.20px;top:190.32px;font-size:6.80px;color:#2a2a2a;transform:scaleX(0.930);transform-origin:left;">5Y</div>
<div class="r" style="left:380px;top:199.34999999999997px;width:42px;height:1px;background:#eeeeee;"></div>
<div class="t" style="left:383.20px;top:205.77px;font-size:6.80px;color:#2a2a2a;transform:scaleX(0.930);transform-origin:left;">7Y</div>
<div class="r" style="left:380px;top:214.79999999999998px;width:42px;height:1px;background:#eeeeee;"></div>
<div class="t" style="left:383.20px;top:221.22px;font-size:6.80px;color:#2a2a2a;transform:scaleX(0.930);transform-origin:left;">10Y</div>
<div class="r" style="left:380px;top:230.24999999999997px;width:42px;height:1px;background:#eeeeee;"></div>
<div class="t" style="left:383.20px;top:236.67px;font-size:6.80px;color:#2a2a2a;transform:scaleX(0.930);transform-origin:left;">15Y</div>
<div class="r" style="left:380px;top:245.7px;width:42px;height:1px;background:#eeeeee;"></div>
<div class="t" style="left:383.20px;top:252.12px;font-size:6.80px;color:#2a2a2a;transform:scaleX(0.930);transform-origin:left;">20Y</div>
<div class="r" style="left:380px;top:261.15px;width:42px;height:1px;background:#eeeeee;"></div>
<div class="t" style="left:383.20px;top:267.57px;font-size:6.80px;color:#2a2a2a;transform:scaleX(0.930);transform-origin:left;">25Y</div>
<div class="r" style="left:380px;top:276.59999999999997px;width:42px;height:1px;background:#eeeeee;"></div>
<div class="t" style="left:383.20px;top:283.02px;font-size:6.80px;color:#2a2a2a;transform:scaleX(0.930);transform-origin:left;">30Y</div>
</div>
<div class="r" style="left:759px;top:108.6px;width:370px;height:14px;background:#ebf3fc;"></div>
<div class="t" style="left:601.00px;width:400px;text-align:center;top:112.40px;font-size:7.30px;color:#17335f;font-weight:bold;transform:scaleX(0.840);transform-origin:center;-webkit-text-stroke:0.3px currentColor;">Data</div>
<div class="t" style="left:759.60px;width:400px;text-align:center;top:112.40px;font-size:7.30px;color:#17335f;font-weight:bold;transform:scaleX(0.840);transform-origin:center;-webkit-text-stroke:0.3px currentColor;">Date</div>
<div class="t" style="right:6.70px;top:112.40px;font-size:7.30px;color:#17335f;font-weight:bold;transform:scaleX(0.840);transform-origin:right;-webkit-text-stroke:0.3px currentColor;">Last</div>
<svg class="r" style="left:761.7px;top:125.99999999999999px;width:8px;height:8px" viewBox="0 0 8 8"><polygon points="4.00,0.20 5.03,2.78 7.80,2.96 5.66,4.74 6.35,7.44 4.00,5.95 1.65,7.44 2.34,4.74 0.20,2.96 2.97,2.78" fill="#f26c12"/></svg>
<div class="t" style="left:774.10px;top:128.52px;font-size:6.80px;color:#2a2a2a;transform:scaleX(0.930);transform-origin:left;">FX SPOT EUR/CAD</div>
<div class="t" style="left:750.20px;width:400px;text-align:center;top:128.52px;font-size:6.80px;color:#2a2a2a;transform:scaleX(0.930);transform-origin:center;">11/16/2023</div>
<div class="t" style="right:6.70px;top:128.52px;font-size:6.80px;color:#2a2a2a;transform:scaleX(0.930);transform-origin:right;">1.4891</div>
<svg class="r" style="left:1124.5px;top:123.0px;width:5px;height:5px" viewBox="0 0 5 5"><path d="M0 0 H5 V5Z" fill="#0d6896"/></svg>
<div class="r" style="left:759px;top:137.54999999999998px;width:370px;height:1px;background:#ebebeb;"></div>
<svg class="r" style="left:761.7px;top:141.45px;width:8px;height:8px" viewBox="0 0 8 8"><polygon points="4.00,0.20 5.03,2.78 7.80,2.96 5.66,4.74 6.35,7.44 4.00,5.95 1.65,7.44 2.34,4.74 0.20,2.96 2.97,2.78" fill="#f26c12"/></svg>
<div class="t" style="left:774.10px;top:143.97px;font-size:6.80px;color:#2a2a2a;transform:scaleX(0.930);transform-origin:left;">Treasury (US) (5Y)</div>
<div class="t" style="left:750.20px;width:400px;text-align:center;top:143.97px;font-size:6.80px;color:#2a2a2a;transform:scaleX(0.930);transform-origin:center;">11/17/2023</div>
<div class="t" style="right:6.70px;top:143.97px;font-size:6.80px;color:#2a2a2a;transform:scaleX(0.930);transform-origin:right;">4.417</div>
<svg class="r" style="left:1124.5px;top:138.45px;width:5px;height:5px" viewBox="0 0 5 5"><path d="M0 0 H5 V5Z" fill="#0d6896"/></svg>
<div class="r" style="left:759px;top:152.99999999999997px;width:370px;height:1px;background:#ebebeb;"></div>
<svg class="r" style="left:761.7px;top:156.9px;width:8px;height:8px" viewBox="0 0 8 8"><polygon points="4.00,0.20 5.03,2.78 7.80,2.96 5.66,4.74 6.35,7.44 4.00,5.95 1.65,7.44 2.34,4.74 0.20,2.96 2.97,2.78" fill="#f26c12"/></svg>
<div class="t" style="left:774.10px;top:159.42px;font-size:6.80px;color:#2a2a2a;transform:scaleX(0.930);transform-origin:left;">Treasury (US) (10Y)</div>
<div class="t" style="left:750.20px;width:400px;text-align:center;top:159.42px;font-size:6.80px;color:#2a2a2a;transform:scaleX(0.930);transform-origin:center;">11/17/2023</div>
<div class="t" style="right:6.70px;top:159.42px;font-size:6.80px;color:#2a2a2a;transform:scaleX(0.930);transform-origin:right;">4.4394</div>
<svg class="r" style="left:1124.5px;top:153.9px;width:5px;height:5px" viewBox="0 0 5 5"><path d="M0 0 H5 V5Z" fill="#0d6896"/></svg>
<div class="r" style="left:759px;top:168.45px;width:370px;height:1px;background:#ebebeb;"></div>
<svg class="r" style="left:761.7px;top:172.35px;width:8px;height:8px" viewBox="0 0 8 8"><polygon points="4.00,0.20 5.03,2.78 7.80,2.96 5.66,4.74 6.35,7.44 4.00,5.95 1.65,7.44 2.34,4.74 0.20,2.96 2.97,2.78" fill="#f26c12"/></svg>
<div class="t" style="left:774.10px;top:174.87px;font-size:6.80px;color:#2a2a2a;transform:scaleX(0.930);transform-origin:left;">Treasury (US) (2Y)</div>
<div class="t" style="left:750.20px;width:400px;text-align:center;top:174.87px;font-size:6.80px;color:#2a2a2a;transform:scaleX(0.930);transform-origin:center;">11/17/2023</div>
<div class="t" style="right:6.70px;top:174.87px;font-size:6.80px;color:#2a2a2a;transform:scaleX(0.930);transform-origin:right;">4.8333</div>
<svg class="r" style="left:1124.5px;top:169.35px;width:5px;height:5px" viewBox="0 0 5 5"><path d="M0 0 H5 V5Z" fill="#0d6896"/></svg>
<div class="r" style="left:759px;top:183.89999999999998px;width:370px;height:1px;background:#ebebeb;"></div>
<svg class="r" style="left:761.7px;top:187.79999999999998px;width:8px;height:8px" viewBox="0 0 8 8"><polygon points="4.00,0.20 5.03,2.78 7.80,2.96 5.66,4.74 6.35,7.44 4.00,5.95 1.65,7.44 2.34,4.74 0.20,2.96 2.97,2.78" fill="#f26c12"/></svg>
<div class="t" style="left:774.10px;top:190.32px;font-size:6.80px;color:#2a2a2a;transform:scaleX(0.930);transform-origin:left;">FX SPOT EUR/CHF</div>
<div class="t" style="left:750.20px;width:400px;text-align:center;top:190.32px;font-size:6.80px;color:#2a2a2a;transform:scaleX(0.930);transform-origin:center;">11/16/2023</div>
<div class="t" style="right:6.70px;top:190.32px;font-size:6.80px;color:#2a2a2a;transform:scaleX(0.930);transform-origin:right;">0.9651</div>
<svg class="r" style="left:1124.5px;top:184.79999999999998px;width:5px;height:5px" viewBox="0 0 5 5"><path d="M0 0 H5 V5Z" fill="#0d6896"/></svg>
<div class="r" style="left:759px;top:199.34999999999997px;width:370px;height:1px;background:#ebebeb;"></div>
<div class="r" style="left:759px;top:316.4px;width:370px;height:14px;background:#ebf3fc;"></div>
<div class="t" style="left:774.30px;top:320.30px;font-size:7.30px;color:#17335f;font-weight:bold;transform:scaleX(0.840);transform-origin:left;-webkit-text-stroke:0.3px currentColor;">Instrument</div>
<div class="t" style="left:695.90px;width:400px;text-align:center;top:320.30px;font-size:7.30px;color:#17335f;font-weight:bold;transform:scaleX(0.840);transform-origin:center;-webkit-text-stroke:0.3px currentColor;">Date</div>
<div class="t" style="right:6.70px;top:320.30px;font-size:7.30px;color:#17335f;font-weight:bold;transform:scaleX(0.840);transform-origin:right;-webkit-text-stroke:0.3px currentColor;">Change</div>
<svg class="r" style="left:761.7px;top:333.90000000000003px;width:8px;height:8px" viewBox="0 0 8 8"><polygon points="4.00,0.20 5.03,2.78 7.80,2.96 5.66,4.74 6.35,7.44 4.00,5.95 1.65,7.44 2.34,4.74 0.20,2.96 2.97,2.78" fill="none" stroke="#666" stroke-width="0.8"/></svg>
<div class="t" style="left:774.30px;top:336.42px;font-size:6.80px;color:#2a2a2a;transform:scaleX(0.930);transform-origin:left;">EUR/AUD</div>
<div class="t" style="left:695.80px;width:400px;text-align:center;top:336.42px;font-size:6.80px;color:#2a2a2a;transform:scaleX(0.930);transform-origin:center;">11/16/2023</div>
<div class="t" style="right:6.70px;top:336.42px;font-size:6.80px;color:#2a2a2a;transform:scaleX(0.930);transform-origin:right;">1.6736</div>
<svg class="r" style="left:1124.5px;top:330.9px;width:5px;height:5px" viewBox="0 0 5 5"><path d="M0 0 H5 V5Z" fill="#0d6896"/></svg>
<div class="r" style="left:759px;top:345.45px;width:370px;height:1px;background:#ebebeb;"></div>
<svg class="r" style="left:761.7px;top:349.35px;width:8px;height:8px" viewBox="0 0 8 8"><polygon points="4.00,0.20 5.03,2.78 7.80,2.96 5.66,4.74 6.35,7.44 4.00,5.95 1.65,7.44 2.34,4.74 0.20,2.96 2.97,2.78" fill="none" stroke="#666" stroke-width="0.8"/></svg>
<div class="t" style="left:774.30px;top:351.87px;font-size:6.80px;color:#2a2a2a;transform:scaleX(0.930);transform-origin:left;">EUR/BRL</div>
<div class="t" style="left:695.80px;width:400px;text-align:center;top:351.87px;font-size:6.80px;color:#2a2a2a;transform:scaleX(0.930);transform-origin:center;">11/16/2023</div>
<div class="t" style="right:6.70px;top:351.87px;font-size:6.80px;color:#2a2a2a;transform:scaleX(0.930);transform-origin:right;">5.2703</div>
<svg class="r" style="left:1124.5px;top:346.34999999999997px;width:5px;height:5px" viewBox="0 0 5 5"><path d="M0 0 H5 V5Z" fill="#0d6896"/></svg>
<div class="r" style="left:759px;top:360.9px;width:370px;height:1px;background:#ebebeb;"></div>
<svg class="r" style="left:761.7px;top:364.8px;width:8px;height:8px" viewBox="0 0 8 8"><polygon points="4.00,0.20 5.03,2.78 7.80,2.96 5.66,4.74 6.35,7.44 4.00,5.95 1.65,7.44 2.34,4.74 0.20,2.96 2.97,2.78" fill="#f26c12"/></svg>
<div class="t" style="left:774.30px;top:367.32px;font-size:6.80px;color:#2a2a2a;transform:scaleX(0.930);transform-origin:left;">EUR/CAD</div>
<div class="t" style="left:695.80px;width:400px;text-align:center;top:367.32px;font-size:6.80px;color:#2a2a2a;transform:scaleX(0.930);transform-origin:center;">11/16/2023</div>
<div class="t" style="right:6.70px;top:367.32px;font-size:6.80px;color:#2a2a2a;transform:scaleX(0.930);transform-origin:right;">1.4891</div>
<svg class="r" style="left:1124.5px;top:361.79999999999995px;width:5px;height:5px" viewBox="0 0 5 5"><path d="M0 0 H5 V5Z" fill="#0d6896"/></svg>
<div class="r" style="left:759px;top:376.34999999999997px;width:370px;height:1px;background:#ebebeb;"></div>
<svg class="r" style="left:761.7px;top:380.25000000000006px;width:8px;height:8px" viewBox="0 0 8 8"><polygon points="4.00,0.20 5.03,2.78 7.80,2.96 5.66,4.74 6.35,7.44 4.00,5.95 1.65,7.44 2.34,4.74 0.20,2.96 2.97,2.78" fill="#f26c12"/></svg>
<div class="t" style="left:774.30px;top:382.77px;font-size:6.80px;color:#2a2a2a;transform:scaleX(0.930);transform-origin:left;">EUR/CHF</div>
<div class="t" style="left:695.80px;width:400px;text-align:center;top:382.77px;font-size:6.80px;color:#2a2a2a;transform:scaleX(0.930);transform-origin:center;">11/16/2023</div>
<div class="t" style="right:6.70px;top:382.77px;font-size:6.80px;color:#2a2a2a;transform:scaleX(0.930);transform-origin:right;">0.9651</div>
<svg class="r" style="left:1124.5px;top:377.25px;width:5px;height:5px" viewBox="0 0 5 5"><path d="M0 0 H5 V5Z" fill="#0d6896"/></svg>
<div class="r" style="left:759px;top:391.8px;width:370px;height:1px;background:#ebebeb;"></div>
<svg class="r" style="left:761.7px;top:395.70000000000005px;width:8px;height:8px" viewBox="0 0 8 8"><polygon points="4.00,0.20 5.03,2.78 7.80,2.96 5.66,4.74 6.35,7.44 4.00,5.95 1.65,7.44 2.34,4.74 0.20,2.96 2.97,2.78" fill="none" stroke="#666" stroke-width="0.8"/></svg>
<div class="t" style="left:774.30px;top:398.22px;font-size:6.80px;color:#2a2a2a;transform:scaleX(0.930);transform-origin:left;">EUR/DKK</div>
<div class="t" style="left:695.80px;width:400px;text-align:center;top:398.22px;font-size:6.80px;color:#2a2a2a;transform:scaleX(0.930);transform-origin:center;">11/16/2023</div>
<div class="t" style="right:6.70px;top:398.22px;font-size:6.80px;color:#2a2a2a;transform:scaleX(0.930);transform-origin:right;">7.4592</div>
<svg class="r" style="left:1124.5px;top:392.7px;width:5px;height:5px" viewBox="0 0 5 5"><path d="M0 0 H5 V5Z" fill="#0d6896"/></svg>
<div class="r" style="left:759px;top:407.25px;width:370px;height:1px;background:#ebebeb;"></div>
<svg class="r" style="left:761.7px;top:411.15000000000003px;width:8px;height:8px" viewBox="0 0 8 8"><polygon points="4.00,0.20 5.03,2.78 7.80,2.96 5.66,4.74 6.35,7.44 4.00,5.95 1.65,7.44 2.34,4.74 0.20,2.96 2.97,2.78" fill="none" stroke="#666" stroke-width="0.8"/></svg>
<div class="t" style="left:774.30px;top:413.67px;font-size:6.80px;color:#2a2a2a;transform:scaleX(0.930);transform-origin:left;">EUR/GBP</div>
<div class="t" style="left:695.80px;width:400px;text-align:center;top:413.67px;font-size:6.80px;color:#2a2a2a;transform:scaleX(0.930);transform-origin:center;">11/16/2023</div>
<div class="t" style="right:6.70px;top:413.67px;font-size:6.80px;color:#2a2a2a;transform:scaleX(0.930);transform-origin:right;">0.8752</div>
<svg class="r" style="left:1124.5px;top:408.15px;width:5px;height:5px" viewBox="0 0 5 5"><path d="M0 0 H5 V5Z" fill="#0d6896"/></svg>
<div class="r" style="left:818px;top:330.5px;width:1px;height:91px;background:#ececec;"></div>
<div class="r" style="left:759px;top:453.6px;width:370px;height:14px;background:#ebf3fc;"></div>
<div class="t" style="left:774.30px;top:457.50px;font-size:7.30px;color:#17335f;font-weight:bold;transform:scaleX(0.840);transform-origin:left;-webkit-text-stroke:0.3px currentColor;">Instrument</div>
<div class="t" style="left:686.10px;width:400px;text-align:center;top:457.50px;font-size:7.30px;color:#17335f;font-weight:bold;transform:scaleX(0.840);transform-origin:center;-webkit-text-stroke:0.3px currentColor;">Maturity</div>
<div class="t" style="right:103.80px;top:457.50px;font-size:7.30px;color:#17335f;font-weight:bold;transform:scaleX(0.840);transform-origin:right;-webkit-text-stroke:0.3px currentColor;">Yield</div>
<div class="t" style="right:6.70px;top:457.50px;font-size:7.30px;color:#17335f;font-weight:bold;transform:scaleX(0.840);transform-origin:right;-webkit-text-stroke:0.3px currentColor;">Price</div>
<svg class="r" style="left:761.7px;top:471.00000000000006px;width:8px;height:8px" viewBox="0 0 8 8"><polygon points="4.00,0.20 5.03,2.78 7.80,2.96 5.66,4.74 6.35,7.44 4.00,5.95 1.65,7.44 2.34,4.74 0.20,2.96 2.97,2.78" fill="#f26c12"/></svg>
<div class="t" style="left:774.30px;top:473.52px;font-size:6.80px;color:#2a2a2a;transform:scaleX(0.930);transform-origin:left;">Treasury (US) (2Y)</div>
<div class="t" style="left:686.10px;width:400px;text-align:center;top:473.52px;font-size:6.80px;color:#2a2a2a;transform:scaleX(0.930);transform-origin:center;">10/31/2025</div>
<div class="t" style="right:103.80px;top:473.52px;font-size:6.80px;color:#2a2a2a;transform:scaleX(0.930);transform-origin:right;">4.8333</div>
<svg class="r" style="left:1027.5px;top:468.0px;width:5px;height:5px" viewBox="0 0 5 5"><path d="M0 0 H5 V5Z" fill="#0d6896"/></svg>
<div class="t" style="right:6.70px;top:473.52px;font-size:6.80px;color:#2a2a2a;transform:scaleX(0.930);transform-origin:right;">100.309</div>
<svg class="r" style="left:1124.5px;top:468.0px;width:5px;height:5px" viewBox="0 0 5 5"><path d="M0 0 H5 V5Z" fill="#0d6896"/></svg>
<div class="r" style="left:759px;top:482.55px;width:370px;height:1px;background:#ebebeb;"></div>
<svg class="r" style="left:761.7px;top:486.45000000000005px;width:8px;height:8px" viewBox="0 0 8 8"><polygon points="4.00,0.20 5.03,2.78 7.80,2.96 5.66,4.74 6.35,7.44 4.00,5.95 1.65,7.44 2.34,4.74 0.20,2.96 2.97,2.78" fill="#f26c12"/></svg>
<div class="t" style="left:774.30px;top:488.97px;font-size:6.80px;color:#2a2a2a;transform:scaleX(0.930);transform-origin:left;">Treasury (US) (5Y)</div>
<div class="t" style="left:686.10px;width:400px;text-align:center;top:488.97px;font-size:6.80px;color:#2a2a2a;transform:scaleX(0.930);transform-origin:center;">10/31/2028</div>
<div class="t" style="right:103.80px;top:488.97px;font-size:6.80px;color:#2a2a2a;transform:scaleX(0.930);transform-origin:right;">4.417</div>
<svg class="r" style="left:1027.5px;top:483.45px;width:5px;height:5px" viewBox="0 0 5 5"><path d="M0 0 H5 V5Z" fill="#0d6896"/></svg>
<div class="t" style="right:6.70px;top:488.97px;font-size:6.80px;color:#2a2a2a;transform:scaleX(0.930);transform-origin:right;">102.023</div>
<svg class="r" style="left:1124.5px;top:483.45px;width:5px;height:5px" viewBox="0 0 5 5"><path d="M0 0 H5 V5Z" fill="#0d6896"/></svg>
<div class="r" style="left:759px;top:498.0px;width:370px;height:1px;background:#ebebeb;"></div>
<svg class="r" style="left:761.7px;top:501.90000000000003px;width:8px;height:8px" viewBox="0 0 8 8"><polygon points="4.00,0.20 5.03,2.78 7.80,2.96 5.66,4.74 6.35,7.44 4.00,5.95 1.65,7.44 2.34,4.74 0.20,2.96 2.97,2.78" fill="#f26c12"/></svg>
<div class="t" style="left:774.30px;top:504.42px;font-size:6.80px;color:#2a2a2a;transform:scaleX(0.930);transform-origin:left;">Treasury (US) (10Y)</div>
<div class="t" style="left:686.10px;width:400px;text-align:center;top:504.42px;font-size:6.80px;color:#2a2a2a;transform:scaleX(0.930);transform-origin:center;">11/15/2033</div>
<div class="t" style="right:103.80px;top:504.42px;font-size:6.80px;color:#2a2a2a;transform:scaleX(0.930);transform-origin:right;">4.4394</div>
<svg class="r" style="left:1027.5px;top:498.9px;width:5px;height:5px" viewBox="0 0 5 5"><path d="M0 0 H5 V5Z" fill="#0d6896"/></svg>
<div class="t" style="right:6.70px;top:504.42px;font-size:6.80px;color:#2a2a2a;transform:scaleX(0.930);transform-origin:right;">100.5</div>
<svg class="r" style="left:1124.5px;top:498.9px;width:5px;height:5px" viewBox="0 0 5 5"><path d="M0 0 H5 V5Z" fill="#0d6896"/></svg>
<div class="r" style="left:759px;top:513.45px;width:370px;height:1px;background:#ebebeb;"></div>
<div class="r" style="left:837px;top:467.6px;width:1px;height:46.349999999999994px;background:#ececec;"></div>
<div class="r" style="left:1px;top:590.4px;width:370px;height:14px;background:#ebf3fc;"></div>
<div class="t" style="left:4.30px;top:594.29px;font-size:7.30px;color:#17335f;font-weight:bold;transform:scaleX(0.840);transform-origin:left;-webkit-text-stroke:0.3px currentColor;">Tenor</div>
<div class="t" style="right:984.30px;top:594.29px;font-size:7.30px;color:#17335f;font-weight:bold;transform:scaleX(0.840);transform-origin:right;-webkit-text-stroke:0.3px currentColor;">USD</div>
<div class="t" style="right:874.60px;top:594.29px;font-size:7.30px;color:#17335f;font-weight:bold;transform:scaleX(0.840);transform-origin:right;-webkit-text-stroke:0.3px currentColor;">EUR</div>
<div class="t" style="right:765.00px;top:594.29px;font-size:7.30px;color:#17335f;font-weight:bold;transform:scaleX(0.840);transform-origin:right;-webkit-text-stroke:0.3px currentColor;">GBP</div>
<div class="t" style="left:4.60px;top:610.32px;font-size:6.80px;color:#2a2a2a;transform:scaleX(0.930);transform-origin:left;">1M</div>
<div class="t" style="right:984.30px;top:610.32px;font-size:6.80px;color:#2a2a2a;transform:scaleX(0.930);transform-origin:right;">5.33107</div>
<svg class="r" style="left:147.3px;top:604.8px;width:5px;height:5px" viewBox="0 0 5 5"><path d="M0 0 H5 V5Z" fill="#0d6896"/></svg>
<div class="t" style="right:874.60px;top:610.32px;font-size:6.80px;color:#2a2a2a;transform:scaleX(0.930);transform-origin:right;">3.903</div>
<svg class="r" style="left:257px;top:604.8px;width:5px;height:5px" viewBox="0 0 5 5"><path d="M0 0 H5 V5Z" fill="#0d6896"/></svg>
<div class="t" style="right:765.00px;top:610.32px;font-size:6.80px;color:#2a2a2a;transform:scaleX(0.930);transform-origin:right;">5.1994</div>
<svg class="r" style="left:366.6px;top:604.8px;width:5px;height:5px" viewBox="0 0 5 5"><path d="M0 0 H5 V5Z" fill="#0d6896"/></svg>
<div class="r" style="left:1px;top:619.35px;width:370px;height:1px;background:#ebebeb;"></div>
<div class="t" style="left:4.60px;top:625.77px;font-size:6.80px;color:#2a2a2a;transform:scaleX(0.930);transform-origin:left;">3M</div>
<div class="t" style="right:984.30px;top:625.77px;font-size:6.80px;color:#2a2a2a;transform:scaleX(0.930);transform-origin:right;">5.3671</div>
<svg class="r" style="left:147.3px;top:620.25px;width:5px;height:5px" viewBox="0 0 5 5"><path d="M0 0 H5 V5Z" fill="#0d6896"/></svg>
<div class="t" style="right:874.60px;top:625.77px;font-size:6.80px;color:#2a2a2a;transform:scaleX(0.930);transform-origin:right;">3.916</div>
<svg class="r" style="left:257px;top:620.25px;width:5px;height:5px" viewBox="0 0 5 5"><path d="M0 0 H5 V5Z" fill="#0d6896"/></svg>
<div class="t" style="right:765.00px;top:625.77px;font-size:6.80px;color:#2a2a2a;transform:scaleX(0.930);transform-origin:right;">5.2288</div>
<svg class="r" style="left:366.6px;top:620.25px;width:5px;height:5px" viewBox="0 0 5 5"><path d="M0 0 H5 V5Z" fill="#0d6896"/></svg>
<div class="r" style="left:1px;top:634.8000000000001px;width:370px;height:1px;background:#ebebeb;"></div>
<div class="r" style="left:43px;top:604.4px;width:1px;height:31px;background:#ececec;"></div>
<div class="t" style="left:3.10px;top:323.60px;font-size:6.00px;color:#555;transform:scaleX(0.887);transform-origin:left;">Zoom</div>
<div class="r" style="left:19.8px;top:318.6px;width:12.8px;height:8.2px;background:#f5f5f5;"></div>
<div class="t" style="left:-173.80px;width:400px;text-align:center;top:321.32px;font-size:5.50px;color:#4a4a4a;transform:scaleX(0.920);transform-origin:center;">1M</div>
<div class="r" style="left:36.1px;top:318.6px;width:12.7px;height:8.2px;background:#f5f5f5;"></div>
<div class="t" style="left:-157.55px;width:400px;text-align:center;top:321.32px;font-size:5.50px;color:#4a4a4a;transform:scaleX(0.920);transform-origin:center;">3M</div>
<div class="r" style="left:51.6px;top:318.6px;width:13.2px;height:8.2px;background:#f5f5f5;"></div>
<div class="t" style="left:-141.80px;width:400px;text-align:center;top:321.32px;font-size:5.50px;color:#4a4a4a;transform:scaleX(0.920);transform-origin:center;">6M</div>
<div class="r" style="left:67.5px;top:318.6px;width:13.8px;height:8.2px;background:#f5f5f5;"></div>
<div class="t" style="left:-125.60px;width:400px;text-align:center;top:321.32px;font-size:5.50px;color:#4a4a4a;transform:scaleX(0.920);transform-origin:center;">YTD</div>
<div class="r" style="left:83.7px;top:318.6px;width:13.3px;height:8.2px;background:#f5f5f5;"></div>
<div class="t" style="left:-109.65px;width:400px;text-align:center;top:321.32px;font-size:5.50px;color:#4a4a4a;transform:scaleX(0.920);transform-origin:center;">1Y</div>
<div class="r" style="left:99.6px;top:318.6px;width:13.3px;height:8.2px;background:#f5f5f5;"></div>
<div class="t" style="left:-93.75px;width:400px;text-align:center;top:321.32px;font-size:5.50px;color:#4a4a4a;transform:scaleX(0.920);transform-origin:center;">2Y</div>
<div class="r" style="left:115.9px;top:318.6px;width:13.2px;height:8.2px;background:#e6ebf4;"></div>
<div class="t" style="left:-77.50px;width:400px;text-align:center;top:321.32px;font-size:5.50px;color:#111;font-weight:bold;transform:scaleX(0.920);transform-origin:center;">ALL</div>
<div class="t" style="left:-185.70px;width:400px;text-align:center;top:401.52px;font-size:5.50px;color:#2a62bc;font-weight:bold;transform:scaleX(0.920);transform-origin:center;-webkit-text-stroke:0.05px currentColor;">Jan '20</div>
<div class="t" style="left:-141.30px;width:400px;text-align:center;top:401.52px;font-size:5.50px;color:#2a62bc;font-weight:bold;transform:scaleX(0.920);transform-origin:center;-webkit-text-stroke:0.05px currentColor;">Jul '20</div>
<div class="t" style="left:-94.30px;width:400px;text-align:center;top:401.52px;font-size:5.50px;color:#2a62bc;font-weight:bold;transform:scaleX(0.920);transform-origin:center;-webkit-text-stroke:0.05px currentColor;">Jan '21</div>
<div class="t" style="left:-49.50px;width:400px;text-align:center;top:401.52px;font-size:5.50px;color:#2a62bc;font-weight:bold;transform:scaleX(0.920);transform-origin:center;-webkit-text-stroke:0.05px currentColor;">Jul '21</div>
<div class="t" style="left:-3.20px;width:400px;text-align:center;top:401.52px;font-size:5.50px;color:#2a62bc;font-weight:bold;transform:scaleX(0.920);transform-origin:center;-webkit-text-stroke:0.05px currentColor;">Jan '22</div>
<div class="t" style="left:42.00px;width:400px;text-align:center;top:401.52px;font-size:5.50px;color:#2a62bc;font-weight:bold;transform:scaleX(0.920);transform-origin:center;-webkit-text-stroke:0.05px currentColor;">Jul '22</div>
<div class="t" style="left:85.60px;width:400px;text-align:center;top:401.52px;font-size:5.50px;color:#2a62bc;font-weight:bold;transform:scaleX(0.920);transform-origin:center;-webkit-text-stroke:0.05px currentColor;">Jan '23</div>
<div class="t" style="left:126.50px;width:400px;text-align:center;top:401.52px;font-size:5.50px;color:#2a62bc;font-weight:bold;transform:scaleX(0.920);transform-origin:center;-webkit-text-stroke:0.05px currentColor;">Jul '23</div>
<div class="r" style="left:2.9px;top:413px;width:5px;height:6.6px;background:#dde6f2;"></div>
<svg class="r" style="left:4.6px;top:414.6px;width:3px;height:3.6px" viewBox="0 0 3 3.6"><path d="M3 0 V3.6 L0 1.8Z" fill="#1d2b44"/></svg>
<div class="r" style="left:9.3px;top:413px;width:343px;height:6.6px;background:#1a69c9;"></div>
<div class="r" style="left:352.3px;top:413px;width:5.5px;height:6.6px;background:#dde6f2;"></div>
<svg class="r" style="left:354px;top:414.6px;width:3px;height:3.6px" viewBox="0 0 3 3.6"><path d="M0 0 V3.6 L3 1.8Z" fill="#1d2b44"/></svg>
<div class="r" style="left:179.0px;top:414.8px;width:0.7px;height:3.0px;background:#b8d0f0;"></div>
<div class="r" style="left:180.5px;top:414.8px;width:0.7px;height:3.0px;background:#b8d0f0;"></div>
<div class="r" style="left:182.0px;top:414.8px;width:0.7px;height:3.0px;background:#b8d0f0;"></div>
<div class="t" style="left:238.70px;width:400px;text-align:center;top:398.60px;font-size:5.30px;color:#2a62bc;font-weight:bold;transform:scaleX(0.920);transform-origin:center;-webkit-text-stroke:0.05px currentColor;">5 Y</div>
<div class="t" style="left:297.90px;width:400px;text-align:center;top:398.60px;font-size:5.30px;color:#2a62bc;font-weight:bold;transform:scaleX(0.920);transform-origin:center;-webkit-text-stroke:0.05px currentColor;">10 Y</div>
<div class="t" style="left:357.10px;width:400px;text-align:center;top:398.60px;font-size:5.30px;color:#2a62bc;font-weight:bold;transform:scaleX(0.920);transform-origin:center;-webkit-text-stroke:0.05px currentColor;">15 Y</div>
<div class="t" style="left:416.30px;width:400px;text-align:center;top:398.60px;font-size:5.30px;color:#2a62bc;font-weight:bold;transform:scaleX(0.920);transform-origin:center;-webkit-text-stroke:0.05px currentColor;">20 Y</div>
<div class="t" style="left:475.50px;width:400px;text-align:center;top:398.60px;font-size:5.30px;color:#2a62bc;font-weight:bold;transform:scaleX(0.920);transform-origin:center;-webkit-text-stroke:0.05px currentColor;">25 Y</div>
<div class="t" style="left:534.70px;width:400px;text-align:center;top:398.60px;font-size:5.30px;color:#2a62bc;font-weight:bold;transform:scaleX(0.920);transform-origin:center;-webkit-text-stroke:0.05px currentColor;">30 Y</div>
<div class="t" style="left:735.80px;top:316.98px;font-size:5.20px;color:#2a62bc;font-weight:bold;transform:scaleX(0.920);transform-origin:left;">6%</div>
<div class="t" style="left:735.80px;top:353.98px;font-size:5.20px;color:#2a62bc;font-weight:bold;transform:scaleX(0.920);transform-origin:left;">4%</div>
<div class="t" style="left:735.80px;top:390.38px;font-size:5.20px;color:#2a62bc;font-weight:bold;transform:scaleX(0.920);transform-origin:left;">2%</div>
<div class="t" style="left:473.90px;top:412.74px;font-size:5.60px;color:#2d68c8;font-weight:bold;transform:scaleX(0.954);transform-origin:left;-webkit-text-stroke:0.08px currentColor;">IRS USD 1M</div>
<div class="t" style="left:528.80px;top:412.74px;font-size:5.60px;color:#2d68c8;font-weight:bold;transform:scaleX(0.935);transform-origin:left;-webkit-text-stroke:0.08px currentColor;">IRS USD 1Y</div>
<div class="t" style="left:581.90px;top:412.74px;font-size:5.60px;color:#2d68c8;font-weight:bold;transform:scaleX(0.961);transform-origin:left;-webkit-text-stroke:0.08px currentColor;">IRS USD 3M</div>
<div class="t" style="left:637.50px;top:412.74px;font-size:5.60px;color:#2d68c8;font-weight:bold;transform:scaleX(0.945);transform-origin:left;-webkit-text-stroke:0.08px currentColor;">IRS USD 6M</div>
<div class="t" style="left:-192.30px;width:400px;text-align:center;top:534.89px;font-size:5.30px;color:#2a62bc;font-weight:bold;transform:scaleX(0.920);transform-origin:center;-webkit-text-stroke:0.05px currentColor;">0 Y</div>
<div class="t" style="left:-136.10px;width:400px;text-align:center;top:534.89px;font-size:5.30px;color:#2a62bc;font-weight:bold;transform:scaleX(0.920);transform-origin:center;-webkit-text-stroke:0.05px currentColor;">5 Y</div>
<div class="t" style="left:-77.90px;width:400px;text-align:center;top:534.89px;font-size:5.30px;color:#2a62bc;font-weight:bold;transform:scaleX(0.920);transform-origin:center;-webkit-text-stroke:0.05px currentColor;">10 Y</div>
<div class="t" style="left:-19.70px;width:400px;text-align:center;top:534.89px;font-size:5.30px;color:#2a62bc;font-weight:bold;transform:scaleX(0.920);transform-origin:center;-webkit-text-stroke:0.05px currentColor;">15 Y</div>
<div class="t" style="left:38.50px;width:400px;text-align:center;top:534.89px;font-size:5.30px;color:#2a62bc;font-weight:bold;transform:scaleX(0.920);transform-origin:center;-webkit-text-stroke:0.05px currentColor;">20 Y</div>
<div class="t" style="left:96.70px;width:400px;text-align:center;top:534.89px;font-size:5.30px;color:#2a62bc;font-weight:bold;transform:scaleX(0.920);transform-origin:center;-webkit-text-stroke:0.05px currentColor;">25 Y</div>
<div class="t" style="left:154.90px;width:400px;text-align:center;top:534.89px;font-size:5.30px;color:#2a62bc;font-weight:bold;transform:scaleX(0.920);transform-origin:center;-webkit-text-stroke:0.05px currentColor;">30 Y</div>
<div class="t" style="left:357.50px;top:473.78px;font-size:5.20px;color:#2a62bc;font-weight:bold;transform:scaleX(0.920);transform-origin:left;">5%</div>
<div class="t" style="left:357.50px;top:525.68px;font-size:5.20px;color:#2a62bc;font-weight:bold;transform:scaleX(0.920);transform-origin:left;">2.5%</div>
<div class="t" style="left:52.00px;top:549.64px;font-size:5.60px;color:#2d68c8;font-weight:bold;transform:scaleX(0.944);transform-origin:left;-webkit-text-stroke:0.08px currentColor;">FWD LIBOR USD 1M</div>
<div class="t" style="left:127.50px;top:549.64px;font-size:5.60px;color:#2d68c8;font-weight:bold;transform:scaleX(0.961);transform-origin:left;-webkit-text-stroke:0.08px currentColor;">FWD LIBOR USD 1Y</div>
<div class="t" style="left:203.00px;top:549.64px;font-size:5.60px;color:#2d68c8;font-weight:bold;transform:scaleX(0.955);transform-origin:left;-webkit-text-stroke:0.08px currentColor;">FWD LIBOR USD 3M</div>
<div class="t" style="left:279.50px;top:549.64px;font-size:5.60px;color:#2d68c8;font-weight:bold;transform:scaleX(0.955);transform-origin:left;-webkit-text-stroke:0.08px currentColor;">FWD LIBOR USD 6M</div>
<div class="t" style="left:187.50px;width:400px;text-align:center;top:535.59px;font-size:5.30px;color:#2a62bc;font-weight:bold;transform:scaleX(0.920);transform-origin:center;-webkit-text-stroke:0.05px currentColor;">0 Y</div>
<div class="t" style="left:243.60px;width:400px;text-align:center;top:535.59px;font-size:5.30px;color:#2a62bc;font-weight:bold;transform:scaleX(0.920);transform-origin:center;-webkit-text-stroke:0.05px currentColor;">10 Y</div>
<div class="t" style="left:301.70px;width:400px;text-align:center;top:535.59px;font-size:5.30px;color:#2a62bc;font-weight:bold;transform:scaleX(0.920);transform-origin:center;-webkit-text-stroke:0.05px currentColor;">20 Y</div>
<div class="t" style="left:359.80px;width:400px;text-align:center;top:535.59px;font-size:5.30px;color:#2a62bc;font-weight:bold;transform:scaleX(0.920);transform-origin:center;-webkit-text-stroke:0.05px currentColor;">30 Y</div>
<div class="t" style="left:417.90px;width:400px;text-align:center;top:535.59px;font-size:5.30px;color:#2a62bc;font-weight:bold;transform:scaleX(0.920);transform-origin:center;-webkit-text-stroke:0.05px currentColor;">40 Y</div>
<div class="t" style="left:476.00px;width:400px;text-align:center;top:535.59px;font-size:5.30px;color:#2a62bc;font-weight:bold;transform:scaleX(0.920);transform-origin:center;-webkit-text-stroke:0.05px currentColor;">50 Y</div>
<div class="t" style="left:534.10px;width:400px;text-align:center;top:535.59px;font-size:5.30px;color:#2a62bc;font-weight:bold;transform:scaleX(0.920);transform-origin:center;-webkit-text-stroke:0.05px currentColor;">60 Y</div>
<div class="t" style="left:736.50px;top:479.08px;font-size:5.20px;color:#2a62bc;font-weight:bold;transform:scaleX(0.920);transform-origin:left;">0.05</div>
<div class="t" style="left:736.50px;top:526.98px;font-size:5.20px;color:#2a62bc;font-weight:bold;transform:scaleX(0.920);transform-origin:left;">0.025</div>
<div class="t" style="left:476.70px;top:550.14px;font-size:5.60px;color:#2d68c8;font-weight:bold;transform:scaleX(0.938);transform-origin:left;-webkit-text-stroke:0.08px currentColor;">YC USD 1M</div>
<div class="t" style="left:530.00px;top:550.14px;font-size:5.60px;color:#2d68c8;font-weight:bold;transform:scaleX(0.933);transform-origin:left;-webkit-text-stroke:0.08px currentColor;">YC USD 1Y</div>
<div class="t" style="left:582.70px;top:550.14px;font-size:5.60px;color:#2d68c8;font-weight:bold;transform:scaleX(0.928);transform-origin:left;-webkit-text-stroke:0.08px currentColor;">YC USD 3M</div>
<div class="t" style="left:636.00px;top:550.14px;font-size:5.60px;color:#2d68c8;font-weight:bold;transform:scaleX(0.928);transform-origin:left;-webkit-text-stroke:0.08px currentColor;">YC USD 6M</div>
<svg class="r" style="left:0;top:0;width:1133px;height:635px" viewBox="0 0 1133 635"><line x1="13.6" y1="338" x2="13.6" y2="398" stroke="#cdcdcd" stroke-width="0.9" stroke-dasharray="1.1 1.6"/><line x1="58.6" y1="338" x2="58.6" y2="398" stroke="#cdcdcd" stroke-width="0.9" stroke-dasharray="1.1 1.6"/><line x1="104.5" y1="338" x2="104.5" y2="398" stroke="#cdcdcd" stroke-width="0.9" stroke-dasharray="1.1 1.6"/><line x1="149.9" y1="338" x2="149.9" y2="398" stroke="#cdcdcd" stroke-width="0.9" stroke-dasharray="1.1 1.6"/><line x1="196.2" y1="338" x2="196.2" y2="398" stroke="#cdcdcd" stroke-width="0.9" stroke-dasharray="1.1 1.6"/><line x1="241" y1="338" x2="241" y2="398" stroke="#cdcdcd" stroke-width="0.9" stroke-dasharray="1.1 1.6"/><line x1="284.9" y1="338" x2="284.9" y2="398" stroke="#cdcdcd" stroke-width="0.9" stroke-dasharray="1.1 1.6"/><line x1="325.7" y1="338" x2="325.7" y2="398" stroke="#cdcdcd" stroke-width="0.9" stroke-dasharray="1.1 1.6"/><line x1="3" y1="347.8" x2="358" y2="347.8" stroke="#9fc1e6" stroke-width="1" stroke-dasharray="1.1 1.4"/><polygon points="3.2,398.3 3.20,390.30 9.00,390.00 15.00,390.00 20.00,389.80 26.50,390.60 31.20,393.00 34.50,392.30 37.80,391.30 41.50,391.00 44.40,391.30 46.50,393.50 48.20,395.40 53.00,396.50 58.00,397.00 62.40,397.70 80.00,398.00 120.00,398.00 150.00,397.80 175.80,397.80 177.70,396.30 181.00,396.00 183.40,396.80 185.00,398.00 196.00,397.50 197.00,394.00 200.00,392.80 206.00,391.50 212.00,389.50 220.00,388.00 228.00,386.00 236.00,383.00 241.00,381.00 247.00,378.50 252.00,375.50 256.00,371.00 260.00,367.50 262.00,366.00 262.60,360.00 263.60,364.80 266.00,366.00 268.00,364.60 271.30,364.30 276.00,361.50 281.00,359.50 285.00,358.20 292.00,356.30 298.00,355.00 301.50,354.20 305.00,353.50 310.00,351.20 316.00,349.20 322.00,346.50 324.20,344.00 327.00,342.30 330.00,342.00 335.00,341.40 338.00,341.50 341.20,340.60 344.00,341.20 346.90,342.60 352.00,343.00 358.20,343.40 358.2,398.3" fill="#faa13c"/><polyline points="3.20,390.30 9.00,390.00 15.00,390.00 20.00,389.80 26.50,390.60 31.20,393.00 34.50,392.30 37.80,391.30 41.50,391.00 44.40,391.30 46.50,393.50 48.20,395.40 53.00,396.50 58.00,397.00 62.40,397.70 80.00,398.00 120.00,398.00 150.00,397.80 175.80,397.80 177.70,396.30 181.00,396.00 183.40,396.80 185.00,398.00 196.00,397.50 197.00,394.00 200.00,392.80 206.00,391.50 212.00,389.50 220.00,388.00 228.00,386.00 236.00,383.00 241.00,381.00 247.00,378.50 252.00,375.50 256.00,371.00 260.00,367.50 262.00,366.00 262.60,360.00 263.60,364.80 266.00,366.00 268.00,364.60 271.30,364.30 276.00,361.50 281.00,359.50 285.00,358.20 292.00,356.30 298.00,355.00 301.50,354.20 305.00,353.50 310.00,351.20 316.00,349.20 322.00,346.50 324.20,344.00 327.00,342.30 330.00,342.00 335.00,341.40 338.00,341.50 341.20,340.60 344.00,341.20 346.90,342.60 352.00,343.00 358.20,343.40" fill="none" stroke="#f2860f" stroke-width="1.3" stroke-linejoin="round"/><line x1="196.2" y1="338" x2="196.2" y2="398" stroke="rgba(120,80,30,0.18)" stroke-width="0.9" stroke-dasharray="1.1 1.6"/><line x1="241" y1="338" x2="241" y2="398" stroke="rgba(120,80,30,0.18)" stroke-width="0.9" stroke-dasharray="1.1 1.6"/><line x1="284.9" y1="338" x2="284.9" y2="398" stroke="rgba(120,80,30,0.18)" stroke-width="0.9" stroke-dasharray="1.1 1.6"/><line x1="325.7" y1="338" x2="325.7" y2="398" stroke="rgba(120,80,30,0.18)" stroke-width="0.9" stroke-dasharray="1.1 1.6"/><line x1="3" y1="398.6" x2="358.5" y2="398.6" stroke="#a9c7ee" stroke-width="1"/><line x1="58.6" y1="393.5" x2="58.6" y2="398.3" stroke="#6c9bd8" stroke-width="0.9"/><line x1="104.5" y1="393.5" x2="104.5" y2="398.3" stroke="#6c9bd8" stroke-width="0.9"/><line x1="149.9" y1="393.5" x2="149.9" y2="398.3" stroke="#6c9bd8" stroke-width="0.9"/><line x1="196.2" y1="393.5" x2="196.2" y2="398.3" stroke="#6c9bd8" stroke-width="0.9"/><circle cx="355.6" cy="395.2" r="1.3" fill="none" stroke="#888" stroke-width="0.6"/><line x1="438.7" y1="318" x2="438.7" y2="395.5" stroke="#cdcdcd" stroke-width="0.9" stroke-dasharray="1.1 1.6"/><line x1="438.7" y1="388.5" x2="438.7" y2="395.5" stroke="#6c9bd8" stroke-width="0.9"/><line x1="497.9" y1="318" x2="497.9" y2="395.5" stroke="#cdcdcd" stroke-width="0.9" stroke-dasharray="1.1 1.6"/><line x1="497.9" y1="388.5" x2="497.9" y2="395.5" stroke="#6c9bd8" stroke-width="0.9"/><line x1="557.1" y1="318" x2="557.1" y2="395.5" stroke="#cdcdcd" stroke-width="0.9" stroke-dasharray="1.1 1.6"/><line x1="557.1" y1="388.5" x2="557.1" y2="395.5" stroke="#6c9bd8" stroke-width="0.9"/><line x1="616.3" y1="318" x2="616.3" y2="395.5" stroke="#cdcdcd" stroke-width="0.9" stroke-dasharray="1.1 1.6"/><line x1="616.3" y1="388.5" x2="616.3" y2="395.5" stroke="#6c9bd8" stroke-width="0.9"/><line x1="675.5" y1="318" x2="675.5" y2="395.5" stroke="#cdcdcd" stroke-width="0.9" stroke-dasharray="1.1 1.6"/><line x1="675.5" y1="388.5" x2="675.5" y2="395.5" stroke="#6c9bd8" stroke-width="0.9"/><line x1="734.7" y1="318" x2="734.7" y2="395.5" stroke="#cdcdcd" stroke-width="0.9" stroke-dasharray="1.1 1.6"/><line x1="734.7" y1="388.5" x2="734.7" y2="395.5" stroke="#6c9bd8" stroke-width="0.9"/><line x1="383.5" y1="322.9" x2="738" y2="322.9" stroke="#9fc1e6" stroke-width="1" stroke-dasharray="1.1 1.4"/><line x1="383.5" y1="359.6" x2="738" y2="359.6" stroke="#9fc1e6" stroke-width="1" stroke-dasharray="1.1 1.4"/><line x1="383.2" y1="395.8" x2="738.5" y2="395.8" stroke="#7ba6df" stroke-width="1"/><polyline points="391.34,337.40 403.18,346.90 415.02,352.00 426.86,354.80 438.70,356.00 462.38,356.60 474.22,356.70 486.06,356.70 497.90,356.60 509.74,356.40 521.58,356.30 533.42,356.20 545.26,356.20 557.10,356.10 616.30,356.50 675.50,357.30 734.70,359.20" fill="none" stroke="#f7931e" stroke-width="1.4" stroke-linejoin="round"/><circle cx="391.34" cy="337.40" r="2.0" fill="#f7931e"/><circle cx="403.18" cy="346.90" r="2.0" fill="#f7931e"/><circle cx="415.02" cy="352.00" r="2.0" fill="#f7931e"/><circle cx="426.86" cy="354.80" r="2.0" fill="#f7931e"/><circle cx="438.70" cy="356.00" r="2.0" fill="#f7931e"/><circle cx="462.38" cy="356.60" r="2.0" fill="#f7931e"/><circle cx="474.22" cy="356.70" r="2.0" fill="#f7931e"/><circle cx="486.06" cy="356.70" r="2.0" fill="#f7931e"/><circle cx="497.90" cy="356.60" r="2.0" fill="#f7931e"/><circle cx="509.74" cy="356.40" r="2.0" fill="#f7931e"/><circle cx="521.58" cy="356.30" r="2.0" fill="#f7931e"/><circle cx="533.42" cy="356.20" r="2.0" fill="#f7931e"/><circle cx="545.26" cy="356.20" r="2.0" fill="#f7931e"/><circle cx="557.10" cy="356.10" r="2.0" fill="#f7931e"/><circle cx="616.30" cy="356.50" r="2.0" fill="#f7931e"/><circle cx="675.50" cy="357.30" r="2.0" fill="#f7931e"/><circle cx="734.70" cy="359.20" r="2.0" fill="#f7931e"/><polyline points="385.42,328.80 391.34,331.90 397.26,337.40 403.18,342.20 415.02,347.30 426.86,350.00 438.70,351.60 462.38,352.50 474.22,352.60 486.06,352.60 497.90,352.50 509.74,352.20 521.58,352.00 533.42,351.80 545.26,351.60 557.10,351.40 616.30,351.80 675.50,352.80 734.70,354.80" fill="none" stroke="#16a0a5" stroke-width="1.4" stroke-linejoin="round"/><circle cx="385.42" cy="328.80" r="2.0" fill="#16a0a5"/><circle cx="391.34" cy="331.90" r="2.0" fill="#16a0a5"/><circle cx="397.26" cy="337.40" r="2.0" fill="#16a0a5"/><circle cx="403.18" cy="342.20" r="2.0" fill="#16a0a5"/><circle cx="415.02" cy="347.30" r="2.0" fill="#16a0a5"/><circle cx="426.86" cy="350.00" r="2.0" fill="#16a0a5"/><circle cx="438.70" cy="351.60" r="2.0" fill="#16a0a5"/><circle cx="462.38" cy="352.50" r="2.0" fill="#16a0a5"/><circle cx="474.22" cy="352.60" r="2.0" fill="#16a0a5"/><circle cx="486.06" cy="352.60" r="2.0" fill="#16a0a5"/><circle cx="497.90" cy="352.50" r="2.0" fill="#16a0a5"/><circle cx="509.74" cy="352.20" r="2.0" fill="#16a0a5"/><circle cx="521.58" cy="352.00" r="2.0" fill="#16a0a5"/><circle cx="533.42" cy="351.80" r="2.0" fill="#16a0a5"/><circle cx="545.26" cy="351.60" r="2.0" fill="#16a0a5"/><circle cx="557.10" cy="351.40" r="2.0" fill="#16a0a5"/><circle cx="616.30" cy="351.80" r="2.0" fill="#16a0a5"/><circle cx="675.50" cy="352.80" r="2.0" fill="#16a0a5"/><circle cx="734.70" cy="354.80" r="2.0" fill="#16a0a5"/><polyline points="385.42,327.20 391.34,329.60 397.26,335.50 403.18,339.40 415.02,344.50 426.86,347.30 438.70,348.50 462.38,349.20 474.22,349.30 486.06,349.30 497.90,349.20 509.74,349.00 521.58,348.80 533.42,348.60 545.26,348.40 557.10,348.20 616.30,348.30 675.50,349.40 734.70,351.40" fill="none" stroke="#0f7cab" stroke-width="1.4" stroke-linejoin="round"/><circle cx="385.42" cy="327.20" r="2.0" fill="#0f7cab"/><circle cx="391.34" cy="329.60" r="2.0" fill="#0f7cab"/><circle cx="397.26" cy="335.50" r="2.0" fill="#0f7cab"/><circle cx="403.18" cy="339.40" r="2.0" fill="#0f7cab"/><circle cx="415.02" cy="344.50" r="2.0" fill="#0f7cab"/><circle cx="426.86" cy="347.30" r="2.0" fill="#0f7cab"/><circle cx="438.70" cy="348.50" r="2.0" fill="#0f7cab"/><circle cx="462.38" cy="349.20" r="2.0" fill="#0f7cab"/><circle cx="474.22" cy="349.30" r="2.0" fill="#0f7cab"/><circle cx="486.06" cy="349.30" r="2.0" fill="#0f7cab"/><circle cx="497.90" cy="349.20" r="2.0" fill="#0f7cab"/><circle cx="509.74" cy="349.00" r="2.0" fill="#0f7cab"/><circle cx="521.58" cy="348.80" r="2.0" fill="#0f7cab"/><circle cx="533.42" cy="348.60" r="2.0" fill="#0f7cab"/><circle cx="545.26" cy="348.40" r="2.0" fill="#0f7cab"/><circle cx="557.10" cy="348.20" r="2.0" fill="#0f7cab"/><circle cx="616.30" cy="348.30" r="2.0" fill="#0f7cab"/><circle cx="675.50" cy="349.40" r="2.0" fill="#0f7cab"/><circle cx="734.70" cy="351.40" r="2.0" fill="#0f7cab"/><polyline points="391.34,320.50 403.18,332.70 415.02,338.60 426.86,341.40 438.70,342.60 462.38,343.20 474.22,343.20 486.06,343.20 497.90,343.00 509.74,342.80 521.58,342.60 533.42,342.60 545.26,342.30 557.10,342.30 616.30,342.50 675.50,344.20 734.70,346.00" fill="none" stroke="#ec2840" stroke-width="1.4" stroke-linejoin="round"/><circle cx="391.34" cy="320.50" r="2.0" fill="#ec2840"/><circle cx="403.18" cy="332.70" r="2.0" fill="#ec2840"/><circle cx="415.02" cy="338.60" r="2.0" fill="#ec2840"/><circle cx="426.86" cy="341.40" r="2.0" fill="#ec2840"/><circle cx="438.70" cy="342.60" r="2.0" fill="#ec2840"/><circle cx="462.38" cy="343.20" r="2.0" fill="#ec2840"/><circle cx="474.22" cy="343.20" r="2.0" fill="#ec2840"/><circle cx="486.06" cy="343.20" r="2.0" fill="#ec2840"/><circle cx="497.90" cy="343.00" r="2.0" fill="#ec2840"/><circle cx="509.74" cy="342.80" r="2.0" fill="#ec2840"/><circle cx="521.58" cy="342.60" r="2.0" fill="#ec2840"/><circle cx="533.42" cy="342.60" r="2.0" fill="#ec2840"/><circle cx="545.26" cy="342.30" r="2.0" fill="#ec2840"/><circle cx="557.10" cy="342.30" r="2.0" fill="#ec2840"/><circle cx="616.30" cy="342.50" r="2.0" fill="#ec2840"/><circle cx="675.50" cy="344.20" r="2.0" fill="#ec2840"/><circle cx="734.70" cy="346.00" r="2.0" fill="#ec2840"/><line x1="461.3" y1="413.9" x2="470.7" y2="413.9" stroke="#f7931e" stroke-width="1.6"/><circle cx="466.0" cy="413.9" r="2" fill="#f7931e"/><line x1="516.2" y1="413.9" x2="525.6" y2="413.9" stroke="#ec2840" stroke-width="1.6"/><circle cx="520.9000000000001" cy="413.9" r="2" fill="#ec2840"/><line x1="569.7" y1="413.9" x2="579.1" y2="413.9" stroke="#16a0a5" stroke-width="1.6"/><circle cx="574.4000000000001" cy="413.9" r="2" fill="#16a0a5"/><line x1="624.7" y1="413.9" x2="634.1" y2="413.9" stroke="#0f7cab" stroke-width="1.6"/><circle cx="629.4000000000001" cy="413.9" r="2" fill="#0f7cab"/><line x1="5.7" y1="455.2" x2="5.7" y2="531" stroke="#cdcdcd" stroke-width="0.9" stroke-dasharray="1.1 1.6"/><line x1="5.7" y1="524.5" x2="5.7" y2="531.5" stroke="#6c9bd8" stroke-width="0.9"/><line x1="63.900000000000006" y1="455.2" x2="63.900000000000006" y2="531" stroke="#cdcdcd" stroke-width="0.9" stroke-dasharray="1.1 1.6"/><line x1="63.900000000000006" y1="524.5" x2="63.900000000000006" y2="531.5" stroke="#6c9bd8" stroke-width="0.9"/><line x1="122.10000000000001" y1="455.2" x2="122.10000000000001" y2="531" stroke="#cdcdcd" stroke-width="0.9" stroke-dasharray="1.1 1.6"/><line x1="122.10000000000001" y1="524.5" x2="122.10000000000001" y2="531.5" stroke="#6c9bd8" stroke-width="0.9"/><line x1="180.3" y1="455.2" x2="180.3" y2="531" stroke="#cdcdcd" stroke-width="0.9" stroke-dasharray="1.1 1.6"/><line x1="180.3" y1="524.5" x2="180.3" y2="531.5" stroke="#6c9bd8" stroke-width="0.9"/><line x1="238.5" y1="455.2" x2="238.5" y2="531" stroke="#cdcdcd" stroke-width="0.9" stroke-dasharray="1.1 1.6"/><line x1="238.5" y1="524.5" x2="238.5" y2="531.5" stroke="#6c9bd8" stroke-width="0.9"/><line x1="296.7" y1="455.2" x2="296.7" y2="531" stroke="#cdcdcd" stroke-width="0.9" stroke-dasharray="1.1 1.6"/><line x1="296.7" y1="524.5" x2="296.7" y2="531.5" stroke="#6c9bd8" stroke-width="0.9"/><line x1="354.90000000000003" y1="455.2" x2="354.90000000000003" y2="531" stroke="#cdcdcd" stroke-width="0.9" stroke-dasharray="1.1 1.6"/><line x1="354.90000000000003" y1="524.5" x2="354.90000000000003" y2="531.5" stroke="#6c9bd8" stroke-width="0.9"/><line x1="5.7" y1="479.4" x2="358" y2="479.4" stroke="#9fc1e6" stroke-width="1" stroke-dasharray="1.1 1.4"/><line x1="5" y1="531.8" x2="358.5" y2="531.8" stroke="#7ba6df" stroke-width="1"/><polyline points="5.70,472.00 7.40,473.70 16.80,485.40 29.50,504.50 40.30,505.50 121.80,494.50 180.20,495.50 238.30,502.90 355.00,524.70" fill="none" stroke="#f7931e" stroke-width="1.4" stroke-linejoin="round"/><polyline points="5.70,467.00 7.40,470.00 16.80,485.40 29.50,501.20 40.30,502.20 121.80,490.40 180.20,492.10 238.30,499.50 355.00,521.60" fill="none" stroke="#16a0a5" stroke-width="1.4" stroke-linejoin="round"/><polyline points="5.70,463.60 7.40,467.00 16.80,485.40 29.50,496.50 40.30,497.80 121.80,486.40 180.20,488.80 238.30,496.10 355.00,519.00" fill="none" stroke="#0f7cab" stroke-width="1.4" stroke-linejoin="round"/><polyline points="5.70,458.60 7.40,462.00 16.80,485.40 29.50,492.10 40.30,491.10 121.80,479.40 180.20,482.00 238.30,490.40 355.00,514.60" fill="none" stroke="#ec2840" stroke-width="1.4" stroke-linejoin="round"/><line x1="39.6" y1="550.8" x2="49.0" y2="550.8" stroke="#f7931e" stroke-width="1.6"/><circle cx="44.300000000000004" cy="550.8" r="2" fill="#f7931e"/><line x1="115.8" y1="550.8" x2="125.2" y2="550.8" stroke="#ec2840" stroke-width="1.6"/><circle cx="120.5" cy="550.8" r="2" fill="#ec2840"/><line x1="191.3" y1="550.8" x2="200.70000000000002" y2="550.8" stroke="#16a0a5" stroke-width="1.6"/><circle cx="196.0" cy="550.8" r="2" fill="#16a0a5"/><line x1="267.4" y1="550.8" x2="276.79999999999995" y2="550.8" stroke="#0f7cab" stroke-width="1.6"/><circle cx="272.09999999999997" cy="550.8" r="2" fill="#0f7cab"/><line x1="385.5" y1="455.5" x2="385.5" y2="532" stroke="#cdcdcd" stroke-width="0.9" stroke-dasharray="1.1 1.6"/><line x1="385.5" y1="525" x2="385.5" y2="532.4" stroke="#6c9bd8" stroke-width="0.9"/><line x1="443.6" y1="455.5" x2="443.6" y2="532" stroke="#cdcdcd" stroke-width="0.9" stroke-dasharray="1.1 1.6"/><line x1="443.6" y1="525" x2="443.6" y2="532.4" stroke="#6c9bd8" stroke-width="0.9"/><line x1="501.7" y1="455.5" x2="501.7" y2="532" stroke="#cdcdcd" stroke-width="0.9" stroke-dasharray="1.1 1.6"/><line x1="501.7" y1="525" x2="501.7" y2="532.4" stroke="#6c9bd8" stroke-width="0.9"/><line x1="559.8" y1="455.5" x2="559.8" y2="532" stroke="#cdcdcd" stroke-width="0.9" stroke-dasharray="1.1 1.6"/><line x1="559.8" y1="525" x2="559.8" y2="532.4" stroke="#6c9bd8" stroke-width="0.9"/><line x1="617.9" y1="455.5" x2="617.9" y2="532" stroke="#cdcdcd" stroke-width="0.9" stroke-dasharray="1.1 1.6"/><line x1="617.9" y1="525" x2="617.9" y2="532.4" stroke="#6c9bd8" stroke-width="0.9"/><line x1="676.0" y1="455.5" x2="676.0" y2="532" stroke="#cdcdcd" stroke-width="0.9" stroke-dasharray="1.1 1.6"/><line x1="676.0" y1="525" x2="676.0" y2="532.4" stroke="#6c9bd8" stroke-width="0.9"/><line x1="734.0999999999999" y1="455.5" x2="734.0999999999999" y2="532" stroke="#cdcdcd" stroke-width="0.9" stroke-dasharray="1.1 1.6"/><line x1="734.0999999999999" y1="525" x2="734.0999999999999" y2="532.4" stroke="#6c9bd8" stroke-width="0.9"/><line x1="385.5" y1="484.6" x2="738" y2="484.6" stroke="#9fc1e6" stroke-width="1" stroke-dasharray="1.1 1.4"/><line x1="385" y1="532.6" x2="738.5" y2="532.6" stroke="#7ba6df" stroke-width="1"/><polyline points="385.50,477.30 390.70,478.40 396.90,488.00 402.70,493.80 408.60,497.30 414.80,499.00 425.80,499.70 443.30,499.70 472.60,498.00 501.50,499.00 560.00,504.20 675.70,518.00 734.20,516.90" fill="none" stroke="#f7931e" stroke-width="1.4" stroke-linejoin="round"/><circle cx="385.50" cy="477.30" r="2.0" fill="#f7931e"/><circle cx="390.70" cy="478.40" r="2.0" fill="#f7931e"/><circle cx="396.90" cy="488.00" r="2.0" fill="#f7931e"/><circle cx="402.70" cy="493.80" r="2.0" fill="#f7931e"/><circle cx="408.60" cy="497.30" r="2.0" fill="#f7931e"/><circle cx="414.80" cy="499.00" r="2.0" fill="#f7931e"/><circle cx="425.80" cy="499.70" r="2.0" fill="#f7931e"/><circle cx="443.30" cy="499.70" r="2.0" fill="#f7931e"/><circle cx="472.60" cy="498.00" r="2.0" fill="#f7931e"/><circle cx="501.50" cy="499.00" r="2.0" fill="#f7931e"/><circle cx="560.00" cy="504.20" r="2.0" fill="#f7931e"/><circle cx="675.70" cy="518.00" r="2.0" fill="#f7931e"/><circle cx="734.20" cy="516.90" r="2.0" fill="#f7931e"/><polyline points="385.50,470.80 390.70,475.60 396.90,484.20 402.70,489.80 408.60,493.40 414.80,495.60 425.80,496.40 443.30,496.30 472.60,494.60 501.50,494.90 560.00,500.00 675.70,515.20 734.20,513.50" fill="none" stroke="#16a0a5" stroke-width="1.4" stroke-linejoin="round"/><circle cx="385.50" cy="470.80" r="2.0" fill="#16a0a5"/><circle cx="390.70" cy="475.60" r="2.0" fill="#16a0a5"/><circle cx="396.90" cy="484.20" r="2.0" fill="#16a0a5"/><circle cx="402.70" cy="489.80" r="2.0" fill="#16a0a5"/><circle cx="408.60" cy="493.40" r="2.0" fill="#16a0a5"/><circle cx="414.80" cy="495.60" r="2.0" fill="#16a0a5"/><circle cx="425.80" cy="496.40" r="2.0" fill="#16a0a5"/><circle cx="443.30" cy="496.30" r="2.0" fill="#16a0a5"/><circle cx="472.60" cy="494.60" r="2.0" fill="#16a0a5"/><circle cx="501.50" cy="494.90" r="2.0" fill="#16a0a5"/><circle cx="560.00" cy="500.00" r="2.0" fill="#16a0a5"/><circle cx="675.70" cy="515.20" r="2.0" fill="#16a0a5"/><circle cx="734.20" cy="513.50" r="2.0" fill="#16a0a5"/><polyline points="385.50,469.00 390.70,473.20 396.90,481.80 402.70,487.00 408.60,490.40 414.80,492.80 425.80,493.80 443.30,493.80 472.60,492.10 501.50,492.80 560.00,498.00 675.70,512.80 734.20,511.00" fill="none" stroke="#0f7cab" stroke-width="1.4" stroke-linejoin="round"/><circle cx="385.50" cy="469.00" r="2.0" fill="#0f7cab"/><circle cx="390.70" cy="473.20" r="2.0" fill="#0f7cab"/><circle cx="396.90" cy="481.80" r="2.0" fill="#0f7cab"/><circle cx="402.70" cy="487.00" r="2.0" fill="#0f7cab"/><circle cx="408.60" cy="490.40" r="2.0" fill="#0f7cab"/><circle cx="414.80" cy="492.80" r="2.0" fill="#0f7cab"/><circle cx="425.80" cy="493.80" r="2.0" fill="#0f7cab"/><circle cx="443.30" cy="493.80" r="2.0" fill="#0f7cab"/><circle cx="472.60" cy="492.10" r="2.0" fill="#0f7cab"/><circle cx="501.50" cy="492.80" r="2.0" fill="#0f7cab"/><circle cx="560.00" cy="498.00" r="2.0" fill="#0f7cab"/><circle cx="675.70" cy="512.80" r="2.0" fill="#0f7cab"/><circle cx="734.20" cy="511.00" r="2.0" fill="#0f7cab"/><polyline points="385.50,457.70 390.70,463.90 396.90,476.60 402.70,482.80 408.60,486.30 414.80,487.70 425.80,488.70 443.30,488.70 472.60,487.00 501.50,487.70 560.00,493.20 675.70,508.30 734.20,507.60" fill="none" stroke="#ec2840" stroke-width="1.4" stroke-linejoin="round"/><circle cx="385.50" cy="457.70" r="2.0" fill="#ec2840"/><circle cx="390.70" cy="463.90" r="2.0" fill="#ec2840"/><circle cx="396.90" cy="476.60" r="2.0" fill="#ec2840"/><circle cx="402.70" cy="482.80" r="2.0" fill="#ec2840"/><circle cx="408.60" cy="486.30" r="2.0" fill="#ec2840"/><circle cx="414.80" cy="487.70" r="2.0" fill="#ec2840"/><circle cx="425.80" cy="488.70" r="2.0" fill="#ec2840"/><circle cx="443.30" cy="488.70" r="2.0" fill="#ec2840"/><circle cx="472.60" cy="487.00" r="2.0" fill="#ec2840"/><circle cx="501.50" cy="487.70" r="2.0" fill="#ec2840"/><circle cx="560.00" cy="493.20" r="2.0" fill="#ec2840"/><circle cx="675.70" cy="508.30" r="2.0" fill="#ec2840"/><circle cx="734.20" cy="507.60" r="2.0" fill="#ec2840"/><line x1="464.7" y1="551.3" x2="474.09999999999997" y2="551.3" stroke="#f7931e" stroke-width="1.6"/><circle cx="469.4" cy="551.3" r="2" fill="#f7931e"/><line x1="518" y1="551.3" x2="527.4" y2="551.3" stroke="#ec2840" stroke-width="1.6"/><circle cx="522.7" cy="551.3" r="2" fill="#ec2840"/><line x1="570.3" y1="551.3" x2="579.6999999999999" y2="551.3" stroke="#16a0a5" stroke-width="1.6"/><circle cx="575.0" cy="551.3" r="2" fill="#16a0a5"/><line x1="624" y1="551.3" x2="633.4" y2="551.3" stroke="#0f7cab" stroke-width="1.6"/><circle cx="628.7" cy="551.3" r="2" fill="#0f7cab"/></svg>
</div></body></html>
